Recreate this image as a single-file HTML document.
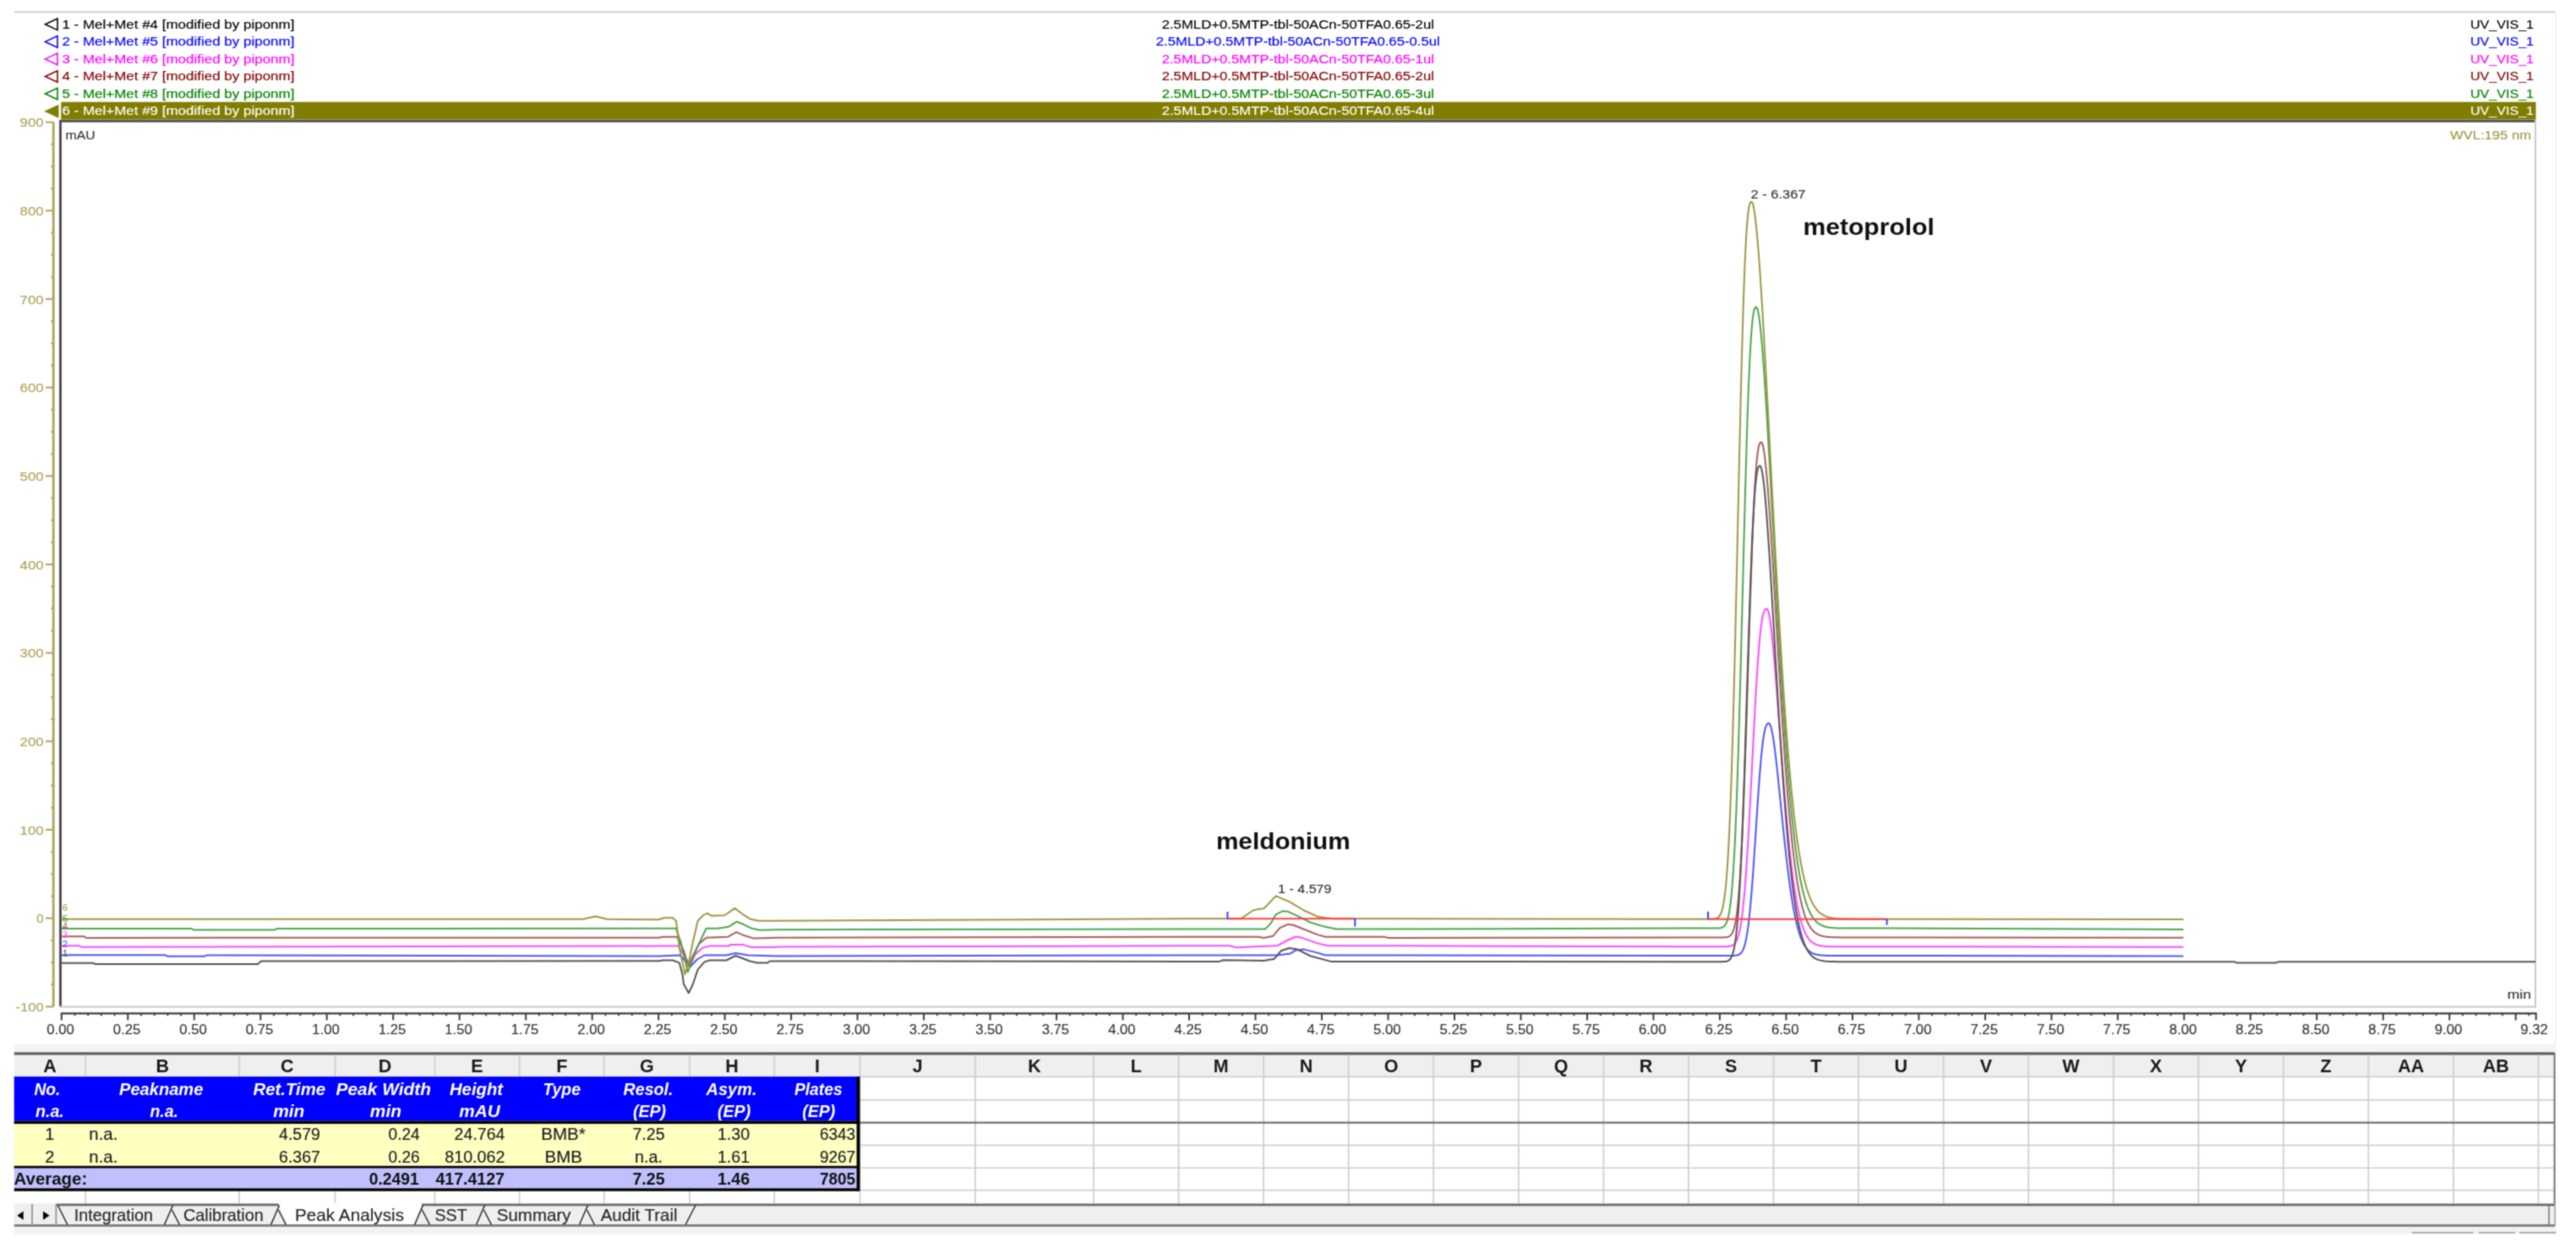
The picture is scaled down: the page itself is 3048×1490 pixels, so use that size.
<!DOCTYPE html>
<html><head><meta charset="utf-8"><title>Chromatogram</title>
<style>
html,body{margin:0;padding:0;background:#fff;width:3048px;height:1490px;overflow:hidden}
svg{display:block;font-family:"Liberation Sans", sans-serif}
</style></head><body>
<svg width="3048" height="1490" viewBox="0 0 3048 1490">
<defs><filter id="soft" x="0" y="0" width="3048" height="1490" filterUnits="userSpaceOnUse" color-interpolation-filters="sRGB"><feConvolveMatrix order="3" kernelMatrix="0.04 0.12 0.04 0.12 0.36 0.12 0.04 0.12 0.04" edgeMode="duplicate"/></filter></defs>
<g filter="url(#soft)">
<rect x="0" y="0" width="3048" height="1490" fill="#ffffff"/>
<line x1="17.0" y1="14.2" x2="3024.0" y2="14.2" stroke="#c4c4c4" stroke-width="1.6"/>
<line x1="3024.0" y1="14.0" x2="3024.0" y2="1236.0" stroke="#f0f0f0" stroke-width="1.5"/>
<rect x="72.3" y="120.7" width="2928.2" height="20.8" fill="#807d00"/>
<polygon points="52.2,131.8 69.5,123.8 69.5,139.8" fill="#807d00"/>
<polygon points="53.5,28.8 68,22.0 68,35.6" fill="none" stroke="#000000" stroke-width="1.6"/>
<text x="73.4" y="33.6" font-size="14" fill="#000000" textLength="275.0" lengthAdjust="spacingAndGlyphs" stroke="#000000" stroke-width="0.15">1 - Mel+Met #4 [modified by piponm]</text>
<text x="1535.8" y="33.6" font-size="14" fill="#000000" text-anchor="middle" textLength="322.3" lengthAdjust="spacingAndGlyphs" stroke="#000000" stroke-width="0.15">2.5MLD+0.5MTP-tbl-50ACn-50TFA0.65-2ul</text>
<text x="2998.0" y="33.6" font-size="14" fill="#000000" text-anchor="end" textLength="75.0" lengthAdjust="spacingAndGlyphs" stroke="#000000" stroke-width="0.15">UV_VIS_1</text>
<polygon points="53.5,49.4 68,42.6 68,56.2" fill="none" stroke="#0000ff" stroke-width="1.6"/>
<text x="73.4" y="54.2" font-size="14" fill="#0000ff" textLength="275.0" lengthAdjust="spacingAndGlyphs" stroke="#0000ff" stroke-width="0.15">2 - Mel+Met #5 [modified by piponm]</text>
<text x="1535.8" y="54.2" font-size="14" fill="#0000ff" text-anchor="middle" textLength="336.0" lengthAdjust="spacingAndGlyphs" stroke="#0000ff" stroke-width="0.15">2.5MLD+0.5MTP-tbl-50ACn-50TFA0.65-0.5ul</text>
<text x="2998.0" y="54.2" font-size="14" fill="#0000ff" text-anchor="end" textLength="75.0" lengthAdjust="spacingAndGlyphs" stroke="#0000ff" stroke-width="0.15">UV_VIS_1</text>
<polygon points="53.5,69.9 68,63.1 68,76.7" fill="none" stroke="#ff00ff" stroke-width="1.6"/>
<text x="73.4" y="74.7" font-size="14" fill="#ff00ff" textLength="275.0" lengthAdjust="spacingAndGlyphs" stroke="#ff00ff" stroke-width="0.15">3 - Mel+Met #6 [modified by piponm]</text>
<text x="1535.8" y="74.7" font-size="14" fill="#ff00ff" text-anchor="middle" textLength="322.3" lengthAdjust="spacingAndGlyphs" stroke="#ff00ff" stroke-width="0.15">2.5MLD+0.5MTP-tbl-50ACn-50TFA0.65-1ul</text>
<text x="2998.0" y="74.7" font-size="14" fill="#ff00ff" text-anchor="end" textLength="75.0" lengthAdjust="spacingAndGlyphs" stroke="#ff00ff" stroke-width="0.15">UV_VIS_1</text>
<polygon points="53.5,90.5 68,83.7 68,97.3" fill="none" stroke="#800000" stroke-width="1.6"/>
<text x="73.4" y="95.3" font-size="14" fill="#800000" textLength="275.0" lengthAdjust="spacingAndGlyphs" stroke="#800000" stroke-width="0.15">4 - Mel+Met #7 [modified by piponm]</text>
<text x="1535.8" y="95.3" font-size="14" fill="#800000" text-anchor="middle" textLength="322.3" lengthAdjust="spacingAndGlyphs" stroke="#800000" stroke-width="0.15">2.5MLD+0.5MTP-tbl-50ACn-50TFA0.65-2ul</text>
<text x="2998.0" y="95.3" font-size="14" fill="#800000" text-anchor="end" textLength="75.0" lengthAdjust="spacingAndGlyphs" stroke="#800000" stroke-width="0.15">UV_VIS_1</text>
<polygon points="53.5,111.0 68,104.2 68,117.8" fill="none" stroke="#008000" stroke-width="1.6"/>
<text x="73.4" y="115.8" font-size="14" fill="#008000" textLength="275.0" lengthAdjust="spacingAndGlyphs" stroke="#008000" stroke-width="0.15">5 - Mel+Met #8 [modified by piponm]</text>
<text x="1535.8" y="115.8" font-size="14" fill="#008000" text-anchor="middle" textLength="322.3" lengthAdjust="spacingAndGlyphs" stroke="#008000" stroke-width="0.15">2.5MLD+0.5MTP-tbl-50ACn-50TFA0.65-3ul</text>
<text x="2998.0" y="115.8" font-size="14" fill="#008000" text-anchor="end" textLength="75.0" lengthAdjust="spacingAndGlyphs" stroke="#008000" stroke-width="0.15">UV_VIS_1</text>
<text x="73.4" y="136.4" font-size="14" fill="#ffffff" textLength="275.0" lengthAdjust="spacingAndGlyphs" stroke="#ffffff" stroke-width="0.15">6 - Mel+Met #9 [modified by piponm]</text>
<text x="1535.8" y="136.4" font-size="14" fill="#ffffff" text-anchor="middle" textLength="322.3" lengthAdjust="spacingAndGlyphs" stroke="#ffffff" stroke-width="0.15">2.5MLD+0.5MTP-tbl-50ACn-50TFA0.65-4ul</text>
<text x="2998.0" y="136.4" font-size="14" fill="#ffffff" text-anchor="end" textLength="75.0" lengthAdjust="spacingAndGlyphs" stroke="#ffffff" stroke-width="0.15">UV_VIS_1</text>
<line x1="71.5" y1="142.5" x2="71.5" y2="1191.5" stroke="#505050" stroke-width="3"/>
<line x1="70.0" y1="143.2" x2="3001.0" y2="143.2" stroke="#505050" stroke-width="3"/>
<line x1="3000.0" y1="142.0" x2="3000.0" y2="1192.3" stroke="#c8c8c8" stroke-width="2"/>
<line x1="70.0" y1="1191.4" x2="3001.0" y2="1191.4" stroke="#c8c8c8" stroke-width="2"/>
<text x="77.6" y="165.0" font-size="14" fill="#333333" textLength="35.0" lengthAdjust="spacingAndGlyphs" stroke="#333333" stroke-width="0.15">mAU</text>
<text x="2995.0" y="165.0" font-size="14" fill="#a09848" text-anchor="end" textLength="96.0" lengthAdjust="spacingAndGlyphs" stroke="#a09848" stroke-width="0.15">WVL:195 nm</text>
<text x="2994.8" y="1181.5" font-size="14" fill="#333333" text-anchor="end" textLength="28.0" lengthAdjust="spacingAndGlyphs" stroke="#333333" stroke-width="0.15">min</text>
<line x1="63.2" y1="144.6" x2="63.2" y2="1191.4" stroke="#aaa35a" stroke-width="2.8"/>
<line x1="54.0" y1="1191.4" x2="63.0" y2="1191.4" stroke="#aaa35a" stroke-width="2"/>
<text x="51.6" y="1197.0" font-size="15" fill="#aca35a" text-anchor="end" textLength="33.0" lengthAdjust="spacingAndGlyphs" stroke="#aca35a" stroke-width="0.15">-100</text>
<line x1="60.3" y1="1165.2" x2="63.0" y2="1165.2" stroke="#aaa35a" stroke-width="2"/>
<line x1="60.3" y1="1139.0" x2="63.0" y2="1139.0" stroke="#aaa35a" stroke-width="2"/>
<line x1="60.3" y1="1112.9" x2="63.0" y2="1112.9" stroke="#aaa35a" stroke-width="2"/>
<line x1="54.0" y1="1086.7" x2="63.0" y2="1086.7" stroke="#aaa35a" stroke-width="2"/>
<text x="51.6" y="1092.3" font-size="15" fill="#aca35a" text-anchor="end" stroke="#aca35a" stroke-width="0.15">0</text>
<line x1="60.3" y1="1060.5" x2="63.0" y2="1060.5" stroke="#aaa35a" stroke-width="2"/>
<line x1="60.3" y1="1034.4" x2="63.0" y2="1034.4" stroke="#aaa35a" stroke-width="2"/>
<line x1="60.3" y1="1008.2" x2="63.0" y2="1008.2" stroke="#aaa35a" stroke-width="2"/>
<line x1="54.0" y1="982.0" x2="63.0" y2="982.0" stroke="#aaa35a" stroke-width="2"/>
<text x="51.6" y="987.6" font-size="15" fill="#aca35a" text-anchor="end" textLength="28.0" lengthAdjust="spacingAndGlyphs" stroke="#aca35a" stroke-width="0.15">100</text>
<line x1="60.3" y1="955.9" x2="63.0" y2="955.9" stroke="#aaa35a" stroke-width="2"/>
<line x1="60.3" y1="929.7" x2="63.0" y2="929.7" stroke="#aaa35a" stroke-width="2"/>
<line x1="60.3" y1="903.5" x2="63.0" y2="903.5" stroke="#aaa35a" stroke-width="2"/>
<line x1="54.0" y1="877.3" x2="63.0" y2="877.3" stroke="#aaa35a" stroke-width="2"/>
<text x="51.6" y="882.9" font-size="15" fill="#aca35a" text-anchor="end" textLength="28.0" lengthAdjust="spacingAndGlyphs" stroke="#aca35a" stroke-width="0.15">200</text>
<line x1="60.3" y1="851.2" x2="63.0" y2="851.2" stroke="#aaa35a" stroke-width="2"/>
<line x1="60.3" y1="825.0" x2="63.0" y2="825.0" stroke="#aaa35a" stroke-width="2"/>
<line x1="60.3" y1="798.8" x2="63.0" y2="798.8" stroke="#aaa35a" stroke-width="2"/>
<line x1="54.0" y1="772.7" x2="63.0" y2="772.7" stroke="#aaa35a" stroke-width="2"/>
<text x="51.6" y="778.3" font-size="15" fill="#aca35a" text-anchor="end" textLength="28.0" lengthAdjust="spacingAndGlyphs" stroke="#aca35a" stroke-width="0.15">300</text>
<line x1="60.3" y1="746.5" x2="63.0" y2="746.5" stroke="#aaa35a" stroke-width="2"/>
<line x1="60.3" y1="720.3" x2="63.0" y2="720.3" stroke="#aaa35a" stroke-width="2"/>
<line x1="60.3" y1="694.2" x2="63.0" y2="694.2" stroke="#aaa35a" stroke-width="2"/>
<line x1="54.0" y1="668.0" x2="63.0" y2="668.0" stroke="#aaa35a" stroke-width="2"/>
<text x="51.6" y="673.6" font-size="15" fill="#aca35a" text-anchor="end" textLength="28.0" lengthAdjust="spacingAndGlyphs" stroke="#aca35a" stroke-width="0.15">400</text>
<line x1="60.3" y1="641.8" x2="63.0" y2="641.8" stroke="#aaa35a" stroke-width="2"/>
<line x1="60.3" y1="615.6" x2="63.0" y2="615.6" stroke="#aaa35a" stroke-width="2"/>
<line x1="60.3" y1="589.5" x2="63.0" y2="589.5" stroke="#aaa35a" stroke-width="2"/>
<line x1="54.0" y1="563.3" x2="63.0" y2="563.3" stroke="#aaa35a" stroke-width="2"/>
<text x="51.6" y="568.9" font-size="15" fill="#aca35a" text-anchor="end" textLength="28.0" lengthAdjust="spacingAndGlyphs" stroke="#aca35a" stroke-width="0.15">500</text>
<line x1="60.3" y1="537.1" x2="63.0" y2="537.1" stroke="#aaa35a" stroke-width="2"/>
<line x1="60.3" y1="511.0" x2="63.0" y2="511.0" stroke="#aaa35a" stroke-width="2"/>
<line x1="60.3" y1="484.8" x2="63.0" y2="484.8" stroke="#aaa35a" stroke-width="2"/>
<line x1="54.0" y1="458.6" x2="63.0" y2="458.6" stroke="#aaa35a" stroke-width="2"/>
<text x="51.6" y="464.2" font-size="15" fill="#aca35a" text-anchor="end" textLength="28.0" lengthAdjust="spacingAndGlyphs" stroke="#aca35a" stroke-width="0.15">600</text>
<line x1="60.3" y1="432.5" x2="63.0" y2="432.5" stroke="#aaa35a" stroke-width="2"/>
<line x1="60.3" y1="406.3" x2="63.0" y2="406.3" stroke="#aaa35a" stroke-width="2"/>
<line x1="60.3" y1="380.1" x2="63.0" y2="380.1" stroke="#aaa35a" stroke-width="2"/>
<line x1="54.0" y1="353.9" x2="63.0" y2="353.9" stroke="#aaa35a" stroke-width="2"/>
<text x="51.6" y="359.5" font-size="15" fill="#aca35a" text-anchor="end" textLength="28.0" lengthAdjust="spacingAndGlyphs" stroke="#aca35a" stroke-width="0.15">700</text>
<line x1="60.3" y1="327.8" x2="63.0" y2="327.8" stroke="#aaa35a" stroke-width="2"/>
<line x1="60.3" y1="301.6" x2="63.0" y2="301.6" stroke="#aaa35a" stroke-width="2"/>
<line x1="60.3" y1="275.4" x2="63.0" y2="275.4" stroke="#aaa35a" stroke-width="2"/>
<line x1="54.0" y1="249.3" x2="63.0" y2="249.3" stroke="#aaa35a" stroke-width="2"/>
<text x="51.6" y="254.9" font-size="15" fill="#aca35a" text-anchor="end" textLength="28.0" lengthAdjust="spacingAndGlyphs" stroke="#aca35a" stroke-width="0.15">800</text>
<line x1="60.3" y1="223.1" x2="63.0" y2="223.1" stroke="#aaa35a" stroke-width="2"/>
<line x1="60.3" y1="196.9" x2="63.0" y2="196.9" stroke="#aaa35a" stroke-width="2"/>
<line x1="60.3" y1="170.8" x2="63.0" y2="170.8" stroke="#aaa35a" stroke-width="2"/>
<line x1="54.0" y1="144.6" x2="63.0" y2="144.6" stroke="#aaa35a" stroke-width="2"/>
<text x="51.6" y="150.2" font-size="15" fill="#aca35a" text-anchor="end" textLength="28.0" lengthAdjust="spacingAndGlyphs" stroke="#aca35a" stroke-width="0.15">900</text>
<line x1="71.9" y1="1199.3" x2="3001.5" y2="1199.3" stroke="#3c3c3c" stroke-width="2.2"/>
<line x1="72.8" y1="1199.0" x2="72.8" y2="1207.4" stroke="#3c3c3c" stroke-width="2"/>
<text x="71.6" y="1224.4" font-size="16" fill="#333333" text-anchor="middle" textLength="32.5" lengthAdjust="spacingAndGlyphs" stroke="#333333" stroke-width="0.15">0.00</text>
<line x1="88.5" y1="1199.0" x2="88.5" y2="1202.2" stroke="#3c3c3c" stroke-width="1.8"/>
<line x1="104.2" y1="1199.0" x2="104.2" y2="1202.2" stroke="#3c3c3c" stroke-width="1.8"/>
<line x1="119.9" y1="1199.0" x2="119.9" y2="1202.2" stroke="#3c3c3c" stroke-width="1.8"/>
<line x1="135.6" y1="1199.0" x2="135.6" y2="1202.2" stroke="#3c3c3c" stroke-width="1.8"/>
<line x1="151.3" y1="1199.0" x2="151.3" y2="1207.4" stroke="#3c3c3c" stroke-width="2"/>
<text x="150.1" y="1224.4" font-size="16" fill="#333333" text-anchor="middle" textLength="32.5" lengthAdjust="spacingAndGlyphs" stroke="#333333" stroke-width="0.15">0.25</text>
<line x1="167.0" y1="1199.0" x2="167.0" y2="1202.2" stroke="#3c3c3c" stroke-width="1.8"/>
<line x1="182.7" y1="1199.0" x2="182.7" y2="1202.2" stroke="#3c3c3c" stroke-width="1.8"/>
<line x1="198.4" y1="1199.0" x2="198.4" y2="1202.2" stroke="#3c3c3c" stroke-width="1.8"/>
<line x1="214.1" y1="1199.0" x2="214.1" y2="1202.2" stroke="#3c3c3c" stroke-width="1.8"/>
<line x1="229.8" y1="1199.0" x2="229.8" y2="1207.4" stroke="#3c3c3c" stroke-width="2"/>
<text x="228.6" y="1224.4" font-size="16" fill="#333333" text-anchor="middle" textLength="32.5" lengthAdjust="spacingAndGlyphs" stroke="#333333" stroke-width="0.15">0.50</text>
<line x1="245.5" y1="1199.0" x2="245.5" y2="1202.2" stroke="#3c3c3c" stroke-width="1.8"/>
<line x1="261.2" y1="1199.0" x2="261.2" y2="1202.2" stroke="#3c3c3c" stroke-width="1.8"/>
<line x1="276.9" y1="1199.0" x2="276.9" y2="1202.2" stroke="#3c3c3c" stroke-width="1.8"/>
<line x1="292.6" y1="1199.0" x2="292.6" y2="1202.2" stroke="#3c3c3c" stroke-width="1.8"/>
<line x1="308.3" y1="1199.0" x2="308.3" y2="1207.4" stroke="#3c3c3c" stroke-width="2"/>
<text x="307.1" y="1224.4" font-size="16" fill="#333333" text-anchor="middle" textLength="32.5" lengthAdjust="spacingAndGlyphs" stroke="#333333" stroke-width="0.15">0.75</text>
<line x1="324.0" y1="1199.0" x2="324.0" y2="1202.2" stroke="#3c3c3c" stroke-width="1.8"/>
<line x1="339.6" y1="1199.0" x2="339.6" y2="1202.2" stroke="#3c3c3c" stroke-width="1.8"/>
<line x1="355.3" y1="1199.0" x2="355.3" y2="1202.2" stroke="#3c3c3c" stroke-width="1.8"/>
<line x1="371.0" y1="1199.0" x2="371.0" y2="1202.2" stroke="#3c3c3c" stroke-width="1.8"/>
<line x1="386.7" y1="1199.0" x2="386.7" y2="1207.4" stroke="#3c3c3c" stroke-width="2"/>
<text x="385.5" y="1224.4" font-size="16" fill="#333333" text-anchor="middle" textLength="32.5" lengthAdjust="spacingAndGlyphs" stroke="#333333" stroke-width="0.15">1.00</text>
<line x1="402.4" y1="1199.0" x2="402.4" y2="1202.2" stroke="#3c3c3c" stroke-width="1.8"/>
<line x1="418.1" y1="1199.0" x2="418.1" y2="1202.2" stroke="#3c3c3c" stroke-width="1.8"/>
<line x1="433.8" y1="1199.0" x2="433.8" y2="1202.2" stroke="#3c3c3c" stroke-width="1.8"/>
<line x1="449.5" y1="1199.0" x2="449.5" y2="1202.2" stroke="#3c3c3c" stroke-width="1.8"/>
<line x1="465.2" y1="1199.0" x2="465.2" y2="1207.4" stroke="#3c3c3c" stroke-width="2"/>
<text x="464.0" y="1224.4" font-size="16" fill="#333333" text-anchor="middle" textLength="32.5" lengthAdjust="spacingAndGlyphs" stroke="#333333" stroke-width="0.15">1.25</text>
<line x1="480.9" y1="1199.0" x2="480.9" y2="1202.2" stroke="#3c3c3c" stroke-width="1.8"/>
<line x1="496.6" y1="1199.0" x2="496.6" y2="1202.2" stroke="#3c3c3c" stroke-width="1.8"/>
<line x1="512.3" y1="1199.0" x2="512.3" y2="1202.2" stroke="#3c3c3c" stroke-width="1.8"/>
<line x1="528.0" y1="1199.0" x2="528.0" y2="1202.2" stroke="#3c3c3c" stroke-width="1.8"/>
<line x1="543.7" y1="1199.0" x2="543.7" y2="1207.4" stroke="#3c3c3c" stroke-width="2"/>
<text x="542.5" y="1224.4" font-size="16" fill="#333333" text-anchor="middle" textLength="32.5" lengthAdjust="spacingAndGlyphs" stroke="#333333" stroke-width="0.15">1.50</text>
<line x1="559.4" y1="1199.0" x2="559.4" y2="1202.2" stroke="#3c3c3c" stroke-width="1.8"/>
<line x1="575.1" y1="1199.0" x2="575.1" y2="1202.2" stroke="#3c3c3c" stroke-width="1.8"/>
<line x1="590.8" y1="1199.0" x2="590.8" y2="1202.2" stroke="#3c3c3c" stroke-width="1.8"/>
<line x1="606.5" y1="1199.0" x2="606.5" y2="1202.2" stroke="#3c3c3c" stroke-width="1.8"/>
<line x1="622.2" y1="1199.0" x2="622.2" y2="1207.4" stroke="#3c3c3c" stroke-width="2"/>
<text x="621.0" y="1224.4" font-size="16" fill="#333333" text-anchor="middle" textLength="32.5" lengthAdjust="spacingAndGlyphs" stroke="#333333" stroke-width="0.15">1.75</text>
<line x1="637.9" y1="1199.0" x2="637.9" y2="1202.2" stroke="#3c3c3c" stroke-width="1.8"/>
<line x1="653.6" y1="1199.0" x2="653.6" y2="1202.2" stroke="#3c3c3c" stroke-width="1.8"/>
<line x1="669.3" y1="1199.0" x2="669.3" y2="1202.2" stroke="#3c3c3c" stroke-width="1.8"/>
<line x1="685.0" y1="1199.0" x2="685.0" y2="1202.2" stroke="#3c3c3c" stroke-width="1.8"/>
<line x1="700.7" y1="1199.0" x2="700.7" y2="1207.4" stroke="#3c3c3c" stroke-width="2"/>
<text x="699.5" y="1224.4" font-size="16" fill="#333333" text-anchor="middle" textLength="32.5" lengthAdjust="spacingAndGlyphs" stroke="#333333" stroke-width="0.15">2.00</text>
<line x1="716.4" y1="1199.0" x2="716.4" y2="1202.2" stroke="#3c3c3c" stroke-width="1.8"/>
<line x1="732.1" y1="1199.0" x2="732.1" y2="1202.2" stroke="#3c3c3c" stroke-width="1.8"/>
<line x1="747.8" y1="1199.0" x2="747.8" y2="1202.2" stroke="#3c3c3c" stroke-width="1.8"/>
<line x1="763.5" y1="1199.0" x2="763.5" y2="1202.2" stroke="#3c3c3c" stroke-width="1.8"/>
<line x1="779.2" y1="1199.0" x2="779.2" y2="1207.4" stroke="#3c3c3c" stroke-width="2"/>
<text x="778.0" y="1224.4" font-size="16" fill="#333333" text-anchor="middle" textLength="32.5" lengthAdjust="spacingAndGlyphs" stroke="#333333" stroke-width="0.15">2.25</text>
<line x1="794.9" y1="1199.0" x2="794.9" y2="1202.2" stroke="#3c3c3c" stroke-width="1.8"/>
<line x1="810.6" y1="1199.0" x2="810.6" y2="1202.2" stroke="#3c3c3c" stroke-width="1.8"/>
<line x1="826.3" y1="1199.0" x2="826.3" y2="1202.2" stroke="#3c3c3c" stroke-width="1.8"/>
<line x1="842.0" y1="1199.0" x2="842.0" y2="1202.2" stroke="#3c3c3c" stroke-width="1.8"/>
<line x1="857.6" y1="1199.0" x2="857.6" y2="1207.4" stroke="#3c3c3c" stroke-width="2"/>
<text x="856.4" y="1224.4" font-size="16" fill="#333333" text-anchor="middle" textLength="32.5" lengthAdjust="spacingAndGlyphs" stroke="#333333" stroke-width="0.15">2.50</text>
<line x1="873.3" y1="1199.0" x2="873.3" y2="1202.2" stroke="#3c3c3c" stroke-width="1.8"/>
<line x1="889.0" y1="1199.0" x2="889.0" y2="1202.2" stroke="#3c3c3c" stroke-width="1.8"/>
<line x1="904.7" y1="1199.0" x2="904.7" y2="1202.2" stroke="#3c3c3c" stroke-width="1.8"/>
<line x1="920.4" y1="1199.0" x2="920.4" y2="1202.2" stroke="#3c3c3c" stroke-width="1.8"/>
<line x1="936.1" y1="1199.0" x2="936.1" y2="1207.4" stroke="#3c3c3c" stroke-width="2"/>
<text x="934.9" y="1224.4" font-size="16" fill="#333333" text-anchor="middle" textLength="32.5" lengthAdjust="spacingAndGlyphs" stroke="#333333" stroke-width="0.15">2.75</text>
<line x1="951.8" y1="1199.0" x2="951.8" y2="1202.2" stroke="#3c3c3c" stroke-width="1.8"/>
<line x1="967.5" y1="1199.0" x2="967.5" y2="1202.2" stroke="#3c3c3c" stroke-width="1.8"/>
<line x1="983.2" y1="1199.0" x2="983.2" y2="1202.2" stroke="#3c3c3c" stroke-width="1.8"/>
<line x1="998.9" y1="1199.0" x2="998.9" y2="1202.2" stroke="#3c3c3c" stroke-width="1.8"/>
<line x1="1014.6" y1="1199.0" x2="1014.6" y2="1207.4" stroke="#3c3c3c" stroke-width="2"/>
<text x="1013.4" y="1224.4" font-size="16" fill="#333333" text-anchor="middle" textLength="32.5" lengthAdjust="spacingAndGlyphs" stroke="#333333" stroke-width="0.15">3.00</text>
<line x1="1030.3" y1="1199.0" x2="1030.3" y2="1202.2" stroke="#3c3c3c" stroke-width="1.8"/>
<line x1="1046.0" y1="1199.0" x2="1046.0" y2="1202.2" stroke="#3c3c3c" stroke-width="1.8"/>
<line x1="1061.7" y1="1199.0" x2="1061.7" y2="1202.2" stroke="#3c3c3c" stroke-width="1.8"/>
<line x1="1077.4" y1="1199.0" x2="1077.4" y2="1202.2" stroke="#3c3c3c" stroke-width="1.8"/>
<line x1="1093.1" y1="1199.0" x2="1093.1" y2="1207.4" stroke="#3c3c3c" stroke-width="2"/>
<text x="1091.9" y="1224.4" font-size="16" fill="#333333" text-anchor="middle" textLength="32.5" lengthAdjust="spacingAndGlyphs" stroke="#333333" stroke-width="0.15">3.25</text>
<line x1="1108.8" y1="1199.0" x2="1108.8" y2="1202.2" stroke="#3c3c3c" stroke-width="1.8"/>
<line x1="1124.5" y1="1199.0" x2="1124.5" y2="1202.2" stroke="#3c3c3c" stroke-width="1.8"/>
<line x1="1140.2" y1="1199.0" x2="1140.2" y2="1202.2" stroke="#3c3c3c" stroke-width="1.8"/>
<line x1="1155.9" y1="1199.0" x2="1155.9" y2="1202.2" stroke="#3c3c3c" stroke-width="1.8"/>
<line x1="1171.6" y1="1199.0" x2="1171.6" y2="1207.4" stroke="#3c3c3c" stroke-width="2"/>
<text x="1170.4" y="1224.4" font-size="16" fill="#333333" text-anchor="middle" textLength="32.5" lengthAdjust="spacingAndGlyphs" stroke="#333333" stroke-width="0.15">3.50</text>
<line x1="1187.3" y1="1199.0" x2="1187.3" y2="1202.2" stroke="#3c3c3c" stroke-width="1.8"/>
<line x1="1203.0" y1="1199.0" x2="1203.0" y2="1202.2" stroke="#3c3c3c" stroke-width="1.8"/>
<line x1="1218.7" y1="1199.0" x2="1218.7" y2="1202.2" stroke="#3c3c3c" stroke-width="1.8"/>
<line x1="1234.4" y1="1199.0" x2="1234.4" y2="1202.2" stroke="#3c3c3c" stroke-width="1.8"/>
<line x1="1250.1" y1="1199.0" x2="1250.1" y2="1207.4" stroke="#3c3c3c" stroke-width="2"/>
<text x="1248.9" y="1224.4" font-size="16" fill="#333333" text-anchor="middle" textLength="32.5" lengthAdjust="spacingAndGlyphs" stroke="#333333" stroke-width="0.15">3.75</text>
<line x1="1265.8" y1="1199.0" x2="1265.8" y2="1202.2" stroke="#3c3c3c" stroke-width="1.8"/>
<line x1="1281.5" y1="1199.0" x2="1281.5" y2="1202.2" stroke="#3c3c3c" stroke-width="1.8"/>
<line x1="1297.2" y1="1199.0" x2="1297.2" y2="1202.2" stroke="#3c3c3c" stroke-width="1.8"/>
<line x1="1312.9" y1="1199.0" x2="1312.9" y2="1202.2" stroke="#3c3c3c" stroke-width="1.8"/>
<line x1="1328.6" y1="1199.0" x2="1328.6" y2="1207.4" stroke="#3c3c3c" stroke-width="2"/>
<text x="1327.4" y="1224.4" font-size="16" fill="#333333" text-anchor="middle" textLength="32.5" lengthAdjust="spacingAndGlyphs" stroke="#333333" stroke-width="0.15">4.00</text>
<line x1="1344.3" y1="1199.0" x2="1344.3" y2="1202.2" stroke="#3c3c3c" stroke-width="1.8"/>
<line x1="1360.0" y1="1199.0" x2="1360.0" y2="1202.2" stroke="#3c3c3c" stroke-width="1.8"/>
<line x1="1375.7" y1="1199.0" x2="1375.7" y2="1202.2" stroke="#3c3c3c" stroke-width="1.8"/>
<line x1="1391.3" y1="1199.0" x2="1391.3" y2="1202.2" stroke="#3c3c3c" stroke-width="1.8"/>
<line x1="1407.0" y1="1199.0" x2="1407.0" y2="1207.4" stroke="#3c3c3c" stroke-width="2"/>
<text x="1405.8" y="1224.4" font-size="16" fill="#333333" text-anchor="middle" textLength="32.5" lengthAdjust="spacingAndGlyphs" stroke="#333333" stroke-width="0.15">4.25</text>
<line x1="1422.7" y1="1199.0" x2="1422.7" y2="1202.2" stroke="#3c3c3c" stroke-width="1.8"/>
<line x1="1438.4" y1="1199.0" x2="1438.4" y2="1202.2" stroke="#3c3c3c" stroke-width="1.8"/>
<line x1="1454.1" y1="1199.0" x2="1454.1" y2="1202.2" stroke="#3c3c3c" stroke-width="1.8"/>
<line x1="1469.8" y1="1199.0" x2="1469.8" y2="1202.2" stroke="#3c3c3c" stroke-width="1.8"/>
<line x1="1485.5" y1="1199.0" x2="1485.5" y2="1207.4" stroke="#3c3c3c" stroke-width="2"/>
<text x="1484.3" y="1224.4" font-size="16" fill="#333333" text-anchor="middle" textLength="32.5" lengthAdjust="spacingAndGlyphs" stroke="#333333" stroke-width="0.15">4.50</text>
<line x1="1501.2" y1="1199.0" x2="1501.2" y2="1202.2" stroke="#3c3c3c" stroke-width="1.8"/>
<line x1="1516.9" y1="1199.0" x2="1516.9" y2="1202.2" stroke="#3c3c3c" stroke-width="1.8"/>
<line x1="1532.6" y1="1199.0" x2="1532.6" y2="1202.2" stroke="#3c3c3c" stroke-width="1.8"/>
<line x1="1548.3" y1="1199.0" x2="1548.3" y2="1202.2" stroke="#3c3c3c" stroke-width="1.8"/>
<line x1="1564.0" y1="1199.0" x2="1564.0" y2="1207.4" stroke="#3c3c3c" stroke-width="2"/>
<text x="1562.8" y="1224.4" font-size="16" fill="#333333" text-anchor="middle" textLength="32.5" lengthAdjust="spacingAndGlyphs" stroke="#333333" stroke-width="0.15">4.75</text>
<line x1="1579.7" y1="1199.0" x2="1579.7" y2="1202.2" stroke="#3c3c3c" stroke-width="1.8"/>
<line x1="1595.4" y1="1199.0" x2="1595.4" y2="1202.2" stroke="#3c3c3c" stroke-width="1.8"/>
<line x1="1611.1" y1="1199.0" x2="1611.1" y2="1202.2" stroke="#3c3c3c" stroke-width="1.8"/>
<line x1="1626.8" y1="1199.0" x2="1626.8" y2="1202.2" stroke="#3c3c3c" stroke-width="1.8"/>
<line x1="1642.5" y1="1199.0" x2="1642.5" y2="1207.4" stroke="#3c3c3c" stroke-width="2"/>
<text x="1641.3" y="1224.4" font-size="16" fill="#333333" text-anchor="middle" textLength="32.5" lengthAdjust="spacingAndGlyphs" stroke="#333333" stroke-width="0.15">5.00</text>
<line x1="1658.2" y1="1199.0" x2="1658.2" y2="1202.2" stroke="#3c3c3c" stroke-width="1.8"/>
<line x1="1673.9" y1="1199.0" x2="1673.9" y2="1202.2" stroke="#3c3c3c" stroke-width="1.8"/>
<line x1="1689.6" y1="1199.0" x2="1689.6" y2="1202.2" stroke="#3c3c3c" stroke-width="1.8"/>
<line x1="1705.3" y1="1199.0" x2="1705.3" y2="1202.2" stroke="#3c3c3c" stroke-width="1.8"/>
<line x1="1721.0" y1="1199.0" x2="1721.0" y2="1207.4" stroke="#3c3c3c" stroke-width="2"/>
<text x="1719.8" y="1224.4" font-size="16" fill="#333333" text-anchor="middle" textLength="32.5" lengthAdjust="spacingAndGlyphs" stroke="#333333" stroke-width="0.15">5.25</text>
<line x1="1736.7" y1="1199.0" x2="1736.7" y2="1202.2" stroke="#3c3c3c" stroke-width="1.8"/>
<line x1="1752.4" y1="1199.0" x2="1752.4" y2="1202.2" stroke="#3c3c3c" stroke-width="1.8"/>
<line x1="1768.1" y1="1199.0" x2="1768.1" y2="1202.2" stroke="#3c3c3c" stroke-width="1.8"/>
<line x1="1783.8" y1="1199.0" x2="1783.8" y2="1202.2" stroke="#3c3c3c" stroke-width="1.8"/>
<line x1="1799.5" y1="1199.0" x2="1799.5" y2="1207.4" stroke="#3c3c3c" stroke-width="2"/>
<text x="1798.3" y="1224.4" font-size="16" fill="#333333" text-anchor="middle" textLength="32.5" lengthAdjust="spacingAndGlyphs" stroke="#333333" stroke-width="0.15">5.50</text>
<line x1="1815.2" y1="1199.0" x2="1815.2" y2="1202.2" stroke="#3c3c3c" stroke-width="1.8"/>
<line x1="1830.9" y1="1199.0" x2="1830.9" y2="1202.2" stroke="#3c3c3c" stroke-width="1.8"/>
<line x1="1846.6" y1="1199.0" x2="1846.6" y2="1202.2" stroke="#3c3c3c" stroke-width="1.8"/>
<line x1="1862.3" y1="1199.0" x2="1862.3" y2="1202.2" stroke="#3c3c3c" stroke-width="1.8"/>
<line x1="1878.0" y1="1199.0" x2="1878.0" y2="1207.4" stroke="#3c3c3c" stroke-width="2"/>
<text x="1876.8" y="1224.4" font-size="16" fill="#333333" text-anchor="middle" textLength="32.5" lengthAdjust="spacingAndGlyphs" stroke="#333333" stroke-width="0.15">5.75</text>
<line x1="1893.7" y1="1199.0" x2="1893.7" y2="1202.2" stroke="#3c3c3c" stroke-width="1.8"/>
<line x1="1909.3" y1="1199.0" x2="1909.3" y2="1202.2" stroke="#3c3c3c" stroke-width="1.8"/>
<line x1="1925.0" y1="1199.0" x2="1925.0" y2="1202.2" stroke="#3c3c3c" stroke-width="1.8"/>
<line x1="1940.7" y1="1199.0" x2="1940.7" y2="1202.2" stroke="#3c3c3c" stroke-width="1.8"/>
<line x1="1956.4" y1="1199.0" x2="1956.4" y2="1207.4" stroke="#3c3c3c" stroke-width="2"/>
<text x="1955.2" y="1224.4" font-size="16" fill="#333333" text-anchor="middle" textLength="32.5" lengthAdjust="spacingAndGlyphs" stroke="#333333" stroke-width="0.15">6.00</text>
<line x1="1972.1" y1="1199.0" x2="1972.1" y2="1202.2" stroke="#3c3c3c" stroke-width="1.8"/>
<line x1="1987.8" y1="1199.0" x2="1987.8" y2="1202.2" stroke="#3c3c3c" stroke-width="1.8"/>
<line x1="2003.5" y1="1199.0" x2="2003.5" y2="1202.2" stroke="#3c3c3c" stroke-width="1.8"/>
<line x1="2019.2" y1="1199.0" x2="2019.2" y2="1202.2" stroke="#3c3c3c" stroke-width="1.8"/>
<line x1="2034.9" y1="1199.0" x2="2034.9" y2="1207.4" stroke="#3c3c3c" stroke-width="2"/>
<text x="2033.7" y="1224.4" font-size="16" fill="#333333" text-anchor="middle" textLength="32.5" lengthAdjust="spacingAndGlyphs" stroke="#333333" stroke-width="0.15">6.25</text>
<line x1="2050.6" y1="1199.0" x2="2050.6" y2="1202.2" stroke="#3c3c3c" stroke-width="1.8"/>
<line x1="2066.3" y1="1199.0" x2="2066.3" y2="1202.2" stroke="#3c3c3c" stroke-width="1.8"/>
<line x1="2082.0" y1="1199.0" x2="2082.0" y2="1202.2" stroke="#3c3c3c" stroke-width="1.8"/>
<line x1="2097.7" y1="1199.0" x2="2097.7" y2="1202.2" stroke="#3c3c3c" stroke-width="1.8"/>
<line x1="2113.4" y1="1199.0" x2="2113.4" y2="1207.4" stroke="#3c3c3c" stroke-width="2"/>
<text x="2112.2" y="1224.4" font-size="16" fill="#333333" text-anchor="middle" textLength="32.5" lengthAdjust="spacingAndGlyphs" stroke="#333333" stroke-width="0.15">6.50</text>
<line x1="2129.1" y1="1199.0" x2="2129.1" y2="1202.2" stroke="#3c3c3c" stroke-width="1.8"/>
<line x1="2144.8" y1="1199.0" x2="2144.8" y2="1202.2" stroke="#3c3c3c" stroke-width="1.8"/>
<line x1="2160.5" y1="1199.0" x2="2160.5" y2="1202.2" stroke="#3c3c3c" stroke-width="1.8"/>
<line x1="2176.2" y1="1199.0" x2="2176.2" y2="1202.2" stroke="#3c3c3c" stroke-width="1.8"/>
<line x1="2191.9" y1="1199.0" x2="2191.9" y2="1207.4" stroke="#3c3c3c" stroke-width="2"/>
<text x="2190.7" y="1224.4" font-size="16" fill="#333333" text-anchor="middle" textLength="32.5" lengthAdjust="spacingAndGlyphs" stroke="#333333" stroke-width="0.15">6.75</text>
<line x1="2207.6" y1="1199.0" x2="2207.6" y2="1202.2" stroke="#3c3c3c" stroke-width="1.8"/>
<line x1="2223.3" y1="1199.0" x2="2223.3" y2="1202.2" stroke="#3c3c3c" stroke-width="1.8"/>
<line x1="2239.0" y1="1199.0" x2="2239.0" y2="1202.2" stroke="#3c3c3c" stroke-width="1.8"/>
<line x1="2254.7" y1="1199.0" x2="2254.7" y2="1202.2" stroke="#3c3c3c" stroke-width="1.8"/>
<line x1="2270.4" y1="1199.0" x2="2270.4" y2="1207.4" stroke="#3c3c3c" stroke-width="2"/>
<text x="2269.2" y="1224.4" font-size="16" fill="#333333" text-anchor="middle" textLength="32.5" lengthAdjust="spacingAndGlyphs" stroke="#333333" stroke-width="0.15">7.00</text>
<line x1="2286.1" y1="1199.0" x2="2286.1" y2="1202.2" stroke="#3c3c3c" stroke-width="1.8"/>
<line x1="2301.8" y1="1199.0" x2="2301.8" y2="1202.2" stroke="#3c3c3c" stroke-width="1.8"/>
<line x1="2317.5" y1="1199.0" x2="2317.5" y2="1202.2" stroke="#3c3c3c" stroke-width="1.8"/>
<line x1="2333.2" y1="1199.0" x2="2333.2" y2="1202.2" stroke="#3c3c3c" stroke-width="1.8"/>
<line x1="2348.9" y1="1199.0" x2="2348.9" y2="1207.4" stroke="#3c3c3c" stroke-width="2"/>
<text x="2347.7" y="1224.4" font-size="16" fill="#333333" text-anchor="middle" textLength="32.5" lengthAdjust="spacingAndGlyphs" stroke="#333333" stroke-width="0.15">7.25</text>
<line x1="2364.6" y1="1199.0" x2="2364.6" y2="1202.2" stroke="#3c3c3c" stroke-width="1.8"/>
<line x1="2380.3" y1="1199.0" x2="2380.3" y2="1202.2" stroke="#3c3c3c" stroke-width="1.8"/>
<line x1="2396.0" y1="1199.0" x2="2396.0" y2="1202.2" stroke="#3c3c3c" stroke-width="1.8"/>
<line x1="2411.7" y1="1199.0" x2="2411.7" y2="1202.2" stroke="#3c3c3c" stroke-width="1.8"/>
<line x1="2427.4" y1="1199.0" x2="2427.4" y2="1207.4" stroke="#3c3c3c" stroke-width="2"/>
<text x="2426.2" y="1224.4" font-size="16" fill="#333333" text-anchor="middle" textLength="32.5" lengthAdjust="spacingAndGlyphs" stroke="#333333" stroke-width="0.15">7.50</text>
<line x1="2443.0" y1="1199.0" x2="2443.0" y2="1202.2" stroke="#3c3c3c" stroke-width="1.8"/>
<line x1="2458.7" y1="1199.0" x2="2458.7" y2="1202.2" stroke="#3c3c3c" stroke-width="1.8"/>
<line x1="2474.4" y1="1199.0" x2="2474.4" y2="1202.2" stroke="#3c3c3c" stroke-width="1.8"/>
<line x1="2490.1" y1="1199.0" x2="2490.1" y2="1202.2" stroke="#3c3c3c" stroke-width="1.8"/>
<line x1="2505.8" y1="1199.0" x2="2505.8" y2="1207.4" stroke="#3c3c3c" stroke-width="2"/>
<text x="2504.6" y="1224.4" font-size="16" fill="#333333" text-anchor="middle" textLength="32.5" lengthAdjust="spacingAndGlyphs" stroke="#333333" stroke-width="0.15">7.75</text>
<line x1="2521.5" y1="1199.0" x2="2521.5" y2="1202.2" stroke="#3c3c3c" stroke-width="1.8"/>
<line x1="2537.2" y1="1199.0" x2="2537.2" y2="1202.2" stroke="#3c3c3c" stroke-width="1.8"/>
<line x1="2552.9" y1="1199.0" x2="2552.9" y2="1202.2" stroke="#3c3c3c" stroke-width="1.8"/>
<line x1="2568.6" y1="1199.0" x2="2568.6" y2="1202.2" stroke="#3c3c3c" stroke-width="1.8"/>
<line x1="2584.3" y1="1199.0" x2="2584.3" y2="1207.4" stroke="#3c3c3c" stroke-width="2"/>
<text x="2583.1" y="1224.4" font-size="16" fill="#333333" text-anchor="middle" textLength="32.5" lengthAdjust="spacingAndGlyphs" stroke="#333333" stroke-width="0.15">8.00</text>
<line x1="2600.0" y1="1199.0" x2="2600.0" y2="1202.2" stroke="#3c3c3c" stroke-width="1.8"/>
<line x1="2615.7" y1="1199.0" x2="2615.7" y2="1202.2" stroke="#3c3c3c" stroke-width="1.8"/>
<line x1="2631.4" y1="1199.0" x2="2631.4" y2="1202.2" stroke="#3c3c3c" stroke-width="1.8"/>
<line x1="2647.1" y1="1199.0" x2="2647.1" y2="1202.2" stroke="#3c3c3c" stroke-width="1.8"/>
<line x1="2662.8" y1="1199.0" x2="2662.8" y2="1207.4" stroke="#3c3c3c" stroke-width="2"/>
<text x="2661.6" y="1224.4" font-size="16" fill="#333333" text-anchor="middle" textLength="32.5" lengthAdjust="spacingAndGlyphs" stroke="#333333" stroke-width="0.15">8.25</text>
<line x1="2678.5" y1="1199.0" x2="2678.5" y2="1202.2" stroke="#3c3c3c" stroke-width="1.8"/>
<line x1="2694.2" y1="1199.0" x2="2694.2" y2="1202.2" stroke="#3c3c3c" stroke-width="1.8"/>
<line x1="2709.9" y1="1199.0" x2="2709.9" y2="1202.2" stroke="#3c3c3c" stroke-width="1.8"/>
<line x1="2725.6" y1="1199.0" x2="2725.6" y2="1202.2" stroke="#3c3c3c" stroke-width="1.8"/>
<line x1="2741.3" y1="1199.0" x2="2741.3" y2="1207.4" stroke="#3c3c3c" stroke-width="2"/>
<text x="2740.1" y="1224.4" font-size="16" fill="#333333" text-anchor="middle" textLength="32.5" lengthAdjust="spacingAndGlyphs" stroke="#333333" stroke-width="0.15">8.50</text>
<line x1="2757.0" y1="1199.0" x2="2757.0" y2="1202.2" stroke="#3c3c3c" stroke-width="1.8"/>
<line x1="2772.7" y1="1199.0" x2="2772.7" y2="1202.2" stroke="#3c3c3c" stroke-width="1.8"/>
<line x1="2788.4" y1="1199.0" x2="2788.4" y2="1202.2" stroke="#3c3c3c" stroke-width="1.8"/>
<line x1="2804.1" y1="1199.0" x2="2804.1" y2="1202.2" stroke="#3c3c3c" stroke-width="1.8"/>
<line x1="2819.8" y1="1199.0" x2="2819.8" y2="1207.4" stroke="#3c3c3c" stroke-width="2"/>
<text x="2818.6" y="1224.4" font-size="16" fill="#333333" text-anchor="middle" textLength="32.5" lengthAdjust="spacingAndGlyphs" stroke="#333333" stroke-width="0.15">8.75</text>
<line x1="2835.5" y1="1199.0" x2="2835.5" y2="1202.2" stroke="#3c3c3c" stroke-width="1.8"/>
<line x1="2851.2" y1="1199.0" x2="2851.2" y2="1202.2" stroke="#3c3c3c" stroke-width="1.8"/>
<line x1="2866.9" y1="1199.0" x2="2866.9" y2="1202.2" stroke="#3c3c3c" stroke-width="1.8"/>
<line x1="2882.6" y1="1199.0" x2="2882.6" y2="1202.2" stroke="#3c3c3c" stroke-width="1.8"/>
<line x1="2898.3" y1="1199.0" x2="2898.3" y2="1207.4" stroke="#3c3c3c" stroke-width="2"/>
<text x="2897.1" y="1224.4" font-size="16" fill="#333333" text-anchor="middle" textLength="32.5" lengthAdjust="spacingAndGlyphs" stroke="#333333" stroke-width="0.15">9.00</text>
<line x1="2914.0" y1="1199.0" x2="2914.0" y2="1202.2" stroke="#3c3c3c" stroke-width="1.8"/>
<line x1="2929.7" y1="1199.0" x2="2929.7" y2="1202.2" stroke="#3c3c3c" stroke-width="1.8"/>
<line x1="2945.4" y1="1199.0" x2="2945.4" y2="1202.2" stroke="#3c3c3c" stroke-width="1.8"/>
<line x1="2961.0" y1="1199.0" x2="2961.0" y2="1202.2" stroke="#3c3c3c" stroke-width="1.8"/>
<line x1="2976.7" y1="1199.0" x2="2976.7" y2="1207.4" stroke="#3c3c3c" stroke-width="2"/>
<line x1="2992.4" y1="1199.0" x2="2992.4" y2="1202.2" stroke="#3c3c3c" stroke-width="1.8"/>
<line x1="3000.7" y1="1199.0" x2="3000.7" y2="1207.4" stroke="#3c3c3c" stroke-width="2"/>
<text x="2998.5" y="1224.4" font-size="16" fill="#333333" text-anchor="middle" textLength="32.5" lengthAdjust="spacingAndGlyphs" stroke="#333333" stroke-width="0.15">9.32</text>
<polyline points="72.5,1130.2 195.0,1130.2 198.0,1131.7 242.0,1131.7 245.0,1130.4 780.0,1131.5 804.8,1130.5 816.7,1144.4 824.7,1135.5 833.6,1130.5 859.4,1130.5 870.4,1128.0 885.3,1130.5 920.0,1131.5 1400.0,1130.5 1511.2,1130.5 1527.1,1128.4 1533.4,1124.4 1543.0,1123.6 1558.8,1127.6 1568.4,1130.5 1650.0,1130.5 1990.0,1131.0 1990.0,1131.0 1993.0,1131.0 1996.0,1131.0 1999.0,1131.0 2002.0,1131.0 2005.0,1131.0 2008.0,1131.0 2011.0,1131.0 2014.0,1131.0 2017.0,1131.0 2020.0,1131.0 2023.0,1131.0 2026.0,1131.0 2027.0,1131.0 2028.0,1131.0 2029.0,1131.0 2030.0,1131.0 2031.0,1131.0 2032.0,1131.0 2033.0,1131.0 2034.0,1131.0 2035.0,1131.0 2036.0,1131.0 2037.0,1131.0 2038.0,1131.0 2039.0,1131.0 2040.0,1131.0 2041.0,1131.0 2042.0,1131.0 2043.0,1131.0 2044.0,1131.0 2045.0,1131.0 2046.0,1131.0 2047.0,1131.0 2048.0,1131.0 2049.0,1131.0 2050.0,1131.0 2051.0,1130.9 2052.0,1130.9 2053.0,1130.8 2054.0,1130.7 2055.0,1130.6 2056.0,1130.3 2057.0,1130.0 2058.0,1129.5 2059.0,1128.8 2060.0,1127.9 2061.0,1126.6 2062.0,1124.9 2063.0,1122.7 2064.0,1119.9 2065.0,1116.3 2066.0,1111.8 2067.0,1106.4 2068.0,1099.9 2069.0,1092.3 2070.0,1083.5 2071.0,1073.5 2072.0,1062.2 2073.0,1049.9 2074.0,1036.5 2075.0,1022.3 2076.0,1007.5 2077.0,992.2 2078.0,976.7 2079.0,961.3 2080.0,946.4 2081.0,932.0 2082.0,918.5 2083.0,906.2 2084.0,895.0 2085.0,885.3 2086.0,877.1 2087.0,870.3 2088.0,865.0 2089.0,861.1 2090.0,858.4 2091.0,856.8 2092.0,856.1 2093.0,856.0 2094.0,856.8 2095.0,859.0 2096.0,862.5 2097.0,867.1 2098.0,872.8 2099.0,879.5 2100.0,886.9 2101.0,895.0 2102.0,903.6 2103.0,912.7 2104.0,922.1 2105.0,931.8 2106.0,941.6 2107.0,951.5 2108.0,961.4 2109.0,971.3 2110.0,981.0 2111.0,990.5 2112.0,999.9 2113.0,1008.9 2114.0,1017.7 2115.0,1026.1 2116.0,1034.2 2117.0,1041.9 2118.0,1049.2 2119.0,1056.1 2120.0,1062.7 2121.0,1068.8 2122.0,1074.6 2123.0,1079.9 2124.0,1084.9 2125.0,1089.5 2126.0,1093.8 2127.0,1097.7 2128.0,1101.3 2129.0,1104.6 2130.0,1107.6 2131.0,1110.3 2132.0,1112.7 2133.0,1114.9 2134.0,1116.9 2135.0,1118.7 2136.0,1120.2 2137.0,1121.7 2138.0,1122.9 2139.0,1124.0 2140.0,1125.0 2141.0,1125.8 2142.0,1126.6 2143.0,1127.2 2144.0,1127.8 2145.0,1128.3 2146.0,1128.7 2147.0,1129.0 2148.0,1129.4 2149.0,1129.6 2150.0,1129.8 2151.0,1130.0 2152.0,1130.2 2153.0,1130.3 2154.0,1130.5 2155.0,1130.5 2156.0,1130.6 2157.0,1130.7 2158.0,1130.8 2159.0,1130.8 2160.0,1130.8 2161.0,1130.9 2162.0,1130.9 2163.0,1130.9 2166.0,1131.0 2169.0,1131.0 2172.0,1131.0 2175.0,1131.0 2178.0,1131.0 2181.0,1131.0 2184.0,1131.0 2187.0,1131.0 2190.0,1131.0 2193.0,1131.0 2196.0,1131.0 2199.0,1131.0 2202.0,1131.0 2205.0,1131.0 2208.0,1131.0 2211.0,1131.0 2214.0,1131.0 2217.0,1131.0 2220.0,1131.0 2223.0,1131.0 2226.0,1131.0 2229.0,1131.0 2232.0,1131.0 2235.0,1131.0 2238.0,1131.0 2583.5,1131.6" fill="none" stroke="#5050ff" stroke-width="2.0" stroke-linejoin="round"/>
<polyline points="72.5,1119.2 93.0,1119.2 96.0,1120.7 780.0,1119.6 802.8,1119.6 809.8,1131.5 815.7,1142.4 822.7,1129.5 831.6,1121.6 839.6,1119.6 862.4,1119.6 864.4,1118.1 879.3,1118.1 889.2,1121.1 917.0,1121.1 920.0,1120.6 1400.0,1119.3 1454.0,1119.3 1463.5,1121.2 1479.4,1120.4 1511.2,1119.3 1523.9,1112.5 1533.4,1108.5 1541.4,1110.1 1558.8,1116.4 1571.5,1119.3 1650.0,1119.3 1990.0,1120.3 1990.0,1120.3 1993.0,1120.3 1996.0,1120.3 1999.0,1120.3 2002.0,1120.3 2005.0,1120.3 2008.0,1120.3 2011.0,1120.3 2014.0,1120.3 2017.0,1120.3 2020.0,1120.3 2023.0,1120.3 2024.0,1120.3 2025.0,1120.3 2026.0,1120.3 2027.0,1120.3 2028.0,1120.3 2029.0,1120.3 2030.0,1120.3 2031.0,1120.3 2032.0,1120.3 2033.0,1120.3 2034.0,1120.3 2035.0,1120.3 2036.0,1120.3 2037.0,1120.3 2038.0,1120.3 2039.0,1120.3 2040.0,1120.3 2041.0,1120.3 2042.0,1120.2 2043.0,1120.2 2044.0,1120.2 2045.0,1120.1 2046.0,1120.0 2047.0,1119.8 2048.0,1119.6 2049.0,1119.3 2050.0,1118.8 2051.0,1118.2 2052.0,1117.4 2053.0,1116.2 2054.0,1114.7 2055.0,1112.8 2056.0,1110.3 2057.0,1107.2 2058.0,1103.4 2059.0,1098.6 2060.0,1092.9 2061.0,1086.1 2062.0,1078.0 2063.0,1068.7 2064.0,1058.0 2065.0,1046.0 2066.0,1032.6 2067.0,1017.8 2068.0,1001.7 2069.0,984.5 2070.0,966.3 2071.0,947.3 2072.0,927.7 2073.0,907.9 2074.0,887.9 2075.0,868.2 2076.0,849.0 2077.0,830.6 2078.0,813.1 2079.0,797.0 2080.0,782.2 2081.0,768.9 2082.0,757.4 2083.0,747.5 2084.0,739.3 2085.0,732.8 2086.0,727.8 2087.0,724.3 2088.0,722.1 2089.0,720.9 2090.0,720.5 2091.0,720.8 2092.0,722.7 2093.0,726.4 2094.0,731.7 2095.0,738.5 2096.0,746.6 2097.0,755.8 2098.0,766.0 2099.0,777.1 2100.0,788.8 2101.0,801.1 2102.0,813.9 2103.0,827.0 2104.0,840.3 2105.0,853.8 2106.0,867.3 2107.0,880.8 2108.0,894.1 2109.0,907.3 2110.0,920.2 2111.0,932.8 2112.0,945.1 2113.0,956.9 2114.0,968.4 2115.0,979.4 2116.0,989.9 2117.0,1000.0 2118.0,1009.6 2119.0,1018.6 2120.0,1027.2 2121.0,1035.2 2122.0,1042.8 2123.0,1049.8 2124.0,1056.4 2125.0,1062.5 2126.0,1068.1 2127.0,1073.4 2128.0,1078.2 2129.0,1082.6 2130.0,1086.6 2131.0,1090.3 2132.0,1093.7 2133.0,1096.7 2134.0,1099.4 2135.0,1101.9 2136.0,1104.1 2137.0,1106.1 2138.0,1107.9 2139.0,1109.5 2140.0,1110.9 2141.0,1112.1 2142.0,1113.2 2143.0,1114.2 2144.0,1115.1 2145.0,1115.8 2146.0,1116.5 2147.0,1117.0 2148.0,1117.5 2149.0,1117.9 2150.0,1118.3 2151.0,1118.6 2152.0,1118.9 2153.0,1119.1 2154.0,1119.3 2155.0,1119.5 2156.0,1119.6 2157.0,1119.7 2158.0,1119.8 2159.0,1119.9 2160.0,1120.0 2161.0,1120.0 2164.0,1120.2 2167.0,1120.2 2170.0,1120.3 2173.0,1120.3 2176.0,1120.3 2179.0,1120.3 2182.0,1120.3 2185.0,1120.3 2188.0,1120.3 2191.0,1120.3 2194.0,1120.3 2197.0,1120.3 2200.0,1120.3 2203.0,1120.3 2206.0,1120.3 2209.0,1120.3 2212.0,1120.3 2215.0,1120.3 2218.0,1120.3 2221.0,1120.3 2224.0,1120.3 2227.0,1120.3 2230.0,1120.3 2233.0,1120.3 2236.0,1120.3 2239.0,1120.3 2583.5,1120.8" fill="none" stroke="#ff48ff" stroke-width="2.0" stroke-linejoin="round"/>
<polyline points="72.5,1108.2 99.0,1108.2 102.0,1109.9 780.0,1109.7 784.0,1108.7 800.9,1108.7 808.8,1124.5 814.8,1143.4 819.7,1131.5 826.7,1117.6 835.6,1109.7 861.4,1108.7 871.4,1103.2 879.3,1106.7 892.2,1110.6 920.0,1109.7 1400.0,1108.8 1488.9,1108.8 1495.3,1110.1 1506.4,1107.7 1514.4,1098.2 1523.9,1093.9 1530.2,1094.7 1542.9,1099.8 1558.8,1106.1 1568.4,1108.8 1638.2,1108.8 1643.0,1110.1 1650.0,1110.1 1990.0,1109.4 1990.0,1109.4 1993.0,1109.4 1996.0,1109.4 1999.0,1109.4 2002.0,1109.4 2005.0,1109.4 2008.0,1109.4 2011.0,1109.4 2014.0,1109.4 2017.0,1109.4 2018.0,1109.4 2019.0,1109.4 2020.0,1109.4 2021.0,1109.4 2022.0,1109.4 2023.0,1109.4 2024.0,1109.4 2025.0,1109.4 2026.0,1109.4 2027.0,1109.4 2028.0,1109.4 2029.0,1109.4 2030.0,1109.4 2031.0,1109.4 2032.0,1109.4 2033.0,1109.4 2034.0,1109.4 2035.0,1109.4 2036.0,1109.4 2037.0,1109.4 2038.0,1109.4 2039.0,1109.4 2040.0,1109.3 2041.0,1109.3 2042.0,1109.2 2043.0,1109.1 2044.0,1108.9 2045.0,1108.6 2046.0,1108.1 2047.0,1107.5 2048.0,1106.6 2049.0,1105.3 2050.0,1103.5 2051.0,1101.1 2052.0,1097.9 2053.0,1093.7 2054.0,1088.3 2055.0,1081.4 2056.0,1072.9 2057.0,1062.5 2058.0,1050.1 2059.0,1035.3 2060.0,1018.2 2061.0,998.5 2062.0,976.4 2063.0,951.9 2064.0,925.3 2065.0,896.6 2066.0,866.4 2067.0,835.0 2068.0,802.9 2069.0,770.6 2070.0,738.7 2071.0,707.7 2072.0,678.1 2073.0,650.5 2074.0,625.2 2075.0,602.5 2076.0,582.7 2077.0,565.9 2078.0,552.2 2079.0,541.5 2080.0,533.5 2081.0,528.2 2082.0,525.0 2083.0,523.6 2084.0,523.3 2085.0,524.4 2086.0,527.6 2087.0,532.8 2088.0,539.7 2089.0,548.2 2090.0,558.2 2091.0,569.4 2092.0,581.8 2093.0,595.1 2094.0,609.3 2095.0,624.3 2096.0,639.8 2097.0,655.9 2098.0,672.3 2099.0,689.1 2100.0,706.0 2101.0,723.1 2102.0,740.1 2103.0,757.2 2104.0,774.1 2105.0,790.8 2106.0,807.3 2107.0,823.5 2108.0,839.3 2109.0,854.8 2110.0,869.9 2111.0,884.4 2112.0,898.6 2113.0,912.2 2114.0,925.3 2115.0,937.8 2116.0,949.8 2117.0,961.3 2118.0,972.2 2119.0,982.5 2120.0,992.3 2121.0,1001.6 2122.0,1010.3 2123.0,1018.5 2124.0,1026.2 2125.0,1033.4 2126.0,1040.1 2127.0,1046.3 2128.0,1052.1 2129.0,1057.5 2130.0,1062.4 2131.0,1067.0 2132.0,1071.2 2133.0,1075.1 2134.0,1078.6 2135.0,1081.8 2136.0,1084.8 2137.0,1087.4 2138.0,1089.9 2139.0,1092.0 2140.0,1094.0 2141.0,1095.8 2142.0,1097.4 2143.0,1098.8 2144.0,1100.1 2145.0,1101.3 2146.0,1102.3 2147.0,1103.2 2148.0,1104.0 2149.0,1104.7 2150.0,1105.3 2151.0,1105.9 2152.0,1106.3 2153.0,1106.8 2154.0,1107.1 2157.0,1108.0 2160.0,1108.5 2163.0,1108.9 2166.0,1109.1 2169.0,1109.2 2172.0,1109.3 2175.0,1109.3 2178.0,1109.4 2181.0,1109.4 2184.0,1109.4 2187.0,1109.4 2190.0,1109.4 2193.0,1109.4 2196.0,1109.4 2199.0,1109.4 2202.0,1109.4 2205.0,1109.4 2208.0,1109.4 2211.0,1109.4 2214.0,1109.4 2217.0,1109.4 2220.0,1109.4 2223.0,1109.4 2226.0,1109.4 2229.0,1109.4 2232.0,1109.4 2235.0,1109.4 2238.0,1109.4 2583.5,1109.8" fill="none" stroke="#aa5c5c" stroke-width="2.0" stroke-linejoin="round"/>
<polyline points="72.5,1139.8 110.0,1139.8 113.0,1141.0 305.0,1141.0 309.0,1137.5 780.0,1137.3 784.0,1136.5 795.9,1136.5 803.8,1139.4 807.8,1154.3 808.8,1164.3 814.8,1175.2 819.7,1165.3 825.7,1147.4 833.6,1138.4 839.6,1136.5 859.4,1136.5 870.4,1131.0 887.2,1137.5 896.2,1139.4 908.1,1139.4 911.1,1137.5 920.0,1137.5 1400.0,1137.9 1442.9,1137.9 1447.6,1136.3 1495.3,1137.1 1508.0,1134.7 1515.9,1125.2 1525.5,1122.0 1535.0,1123.6 1550.9,1131.5 1574.7,1137.9 1650.0,1137.9 1990.0,1138.2 1990.0,1138.2 1993.0,1138.2 1996.0,1138.2 1999.0,1138.2 2002.0,1138.2 2005.0,1138.2 2008.0,1138.2 2011.0,1138.2 2014.0,1138.2 2015.0,1138.2 2016.0,1138.2 2017.0,1138.2 2018.0,1138.2 2019.0,1138.2 2020.0,1138.2 2021.0,1138.2 2022.0,1138.2 2023.0,1138.2 2024.0,1138.2 2025.0,1138.2 2026.0,1138.2 2027.0,1138.2 2028.0,1138.2 2029.0,1138.2 2030.0,1138.2 2031.0,1138.2 2032.0,1138.2 2033.0,1138.2 2034.0,1138.2 2035.0,1138.2 2036.0,1138.2 2037.0,1138.2 2038.0,1138.2 2039.0,1138.1 2040.0,1138.1 2041.0,1138.0 2042.0,1137.9 2043.0,1137.7 2044.0,1137.4 2045.0,1136.9 2046.0,1136.2 2047.0,1135.3 2048.0,1133.9 2049.0,1132.0 2050.0,1129.5 2051.0,1126.1 2052.0,1121.7 2053.0,1115.9 2054.0,1108.7 2055.0,1099.8 2056.0,1088.9 2057.0,1075.7 2058.0,1060.3 2059.0,1042.3 2060.0,1021.8 2061.0,998.8 2062.0,973.4 2063.0,945.8 2064.0,916.3 2065.0,885.3 2066.0,853.2 2067.0,820.6 2068.0,788.0 2069.0,755.9 2070.0,725.0 2071.0,695.8 2072.0,668.6 2073.0,644.0 2074.0,622.2 2075.0,603.4 2076.0,587.7 2077.0,575.2 2078.0,565.6 2079.0,558.8 2080.0,554.4 2081.0,552.1 2082.0,551.3 2083.0,551.6 2084.0,553.9 2085.0,558.2 2086.0,564.4 2087.0,572.4 2088.0,581.9 2089.0,592.9 2090.0,605.0 2091.0,618.3 2092.0,632.4 2093.0,647.4 2094.0,663.1 2095.0,679.3 2096.0,695.9 2097.0,712.9 2098.0,730.1 2099.0,747.4 2100.0,764.8 2101.0,782.2 2102.0,799.4 2103.0,816.5 2104.0,833.3 2105.0,849.8 2106.0,866.0 2107.0,881.8 2108.0,897.2 2109.0,912.0 2110.0,926.4 2111.0,940.3 2112.0,953.6 2113.0,966.4 2114.0,978.6 2115.0,990.3 2116.0,1001.3 2117.0,1011.8 2118.0,1021.7 2119.0,1031.1 2120.0,1039.9 2121.0,1048.2 2122.0,1055.9 2123.0,1063.2 2124.0,1069.9 2125.0,1076.1 2126.0,1082.0 2127.0,1087.3 2128.0,1092.3 2129.0,1096.8 2130.0,1101.0 2131.0,1104.8 2132.0,1108.3 2133.0,1111.5 2134.0,1114.4 2135.0,1117.0 2136.0,1119.4 2137.0,1121.6 2138.0,1123.5 2139.0,1125.2 2140.0,1126.8 2141.0,1128.2 2142.0,1129.4 2143.0,1130.5 2144.0,1131.5 2145.0,1132.4 2146.0,1133.1 2147.0,1133.8 2148.0,1134.4 2149.0,1134.9 2150.0,1135.4 2151.0,1135.8 2152.0,1136.1 2153.0,1136.4 2156.0,1137.1 2159.0,1137.5 2162.0,1137.8 2165.0,1138.0 2168.0,1138.1 2171.0,1138.1 2174.0,1138.2 2177.0,1138.2 2180.0,1138.2 2183.0,1138.2 2186.0,1138.2 2189.0,1138.2 2192.0,1138.2 2195.0,1138.2 2198.0,1138.2 2201.0,1138.2 2204.0,1138.2 2207.0,1138.2 2210.0,1138.2 2213.0,1138.2 2216.0,1138.2 2219.0,1138.2 2222.0,1138.2 2225.0,1138.2 2228.0,1138.2 2231.0,1138.2 2234.0,1138.2 2237.0,1138.2 2240.0,1138.2 2644.0,1138.2 2646.0,1139.5 2693.0,1139.5 2696.0,1138.2 3000.0,1138.2" fill="none" stroke="#555555" stroke-width="2.0" stroke-linejoin="round"/>
<polyline points="72.5,1098.9 226.0,1098.9 229.0,1100.4 325.0,1100.4 328.0,1099.0 780.0,1098.7 799.9,1098.7 805.8,1115.6 813.8,1150.4 819.7,1135.5 825.7,1119.6 835.6,1098.7 849.5,1098.7 862.4,1096.7 871.4,1090.8 879.3,1093.8 889.2,1098.7 899.2,1100.7 920.0,1100.2 1400.0,1099.5 1496.9,1099.5 1503.2,1093.4 1509.6,1082.3 1517.5,1078.3 1523.9,1078.8 1535.0,1083.9 1550.9,1091.8 1566.8,1096.6 1581.1,1099.5 1650.0,1099.5 1990.0,1098.6 1990.0,1098.6 1993.0,1098.6 1996.0,1098.6 1999.0,1098.6 2002.0,1098.6 2005.0,1098.6 2008.0,1098.6 2011.0,1098.6 2012.0,1098.6 2013.0,1098.6 2014.0,1098.6 2015.0,1098.6 2016.0,1098.6 2017.0,1098.6 2018.0,1098.6 2019.0,1098.6 2020.0,1098.6 2021.0,1098.6 2022.0,1098.6 2023.0,1098.6 2024.0,1098.6 2025.0,1098.6 2026.0,1098.6 2027.0,1098.6 2028.0,1098.6 2029.0,1098.6 2030.0,1098.6 2031.0,1098.6 2032.0,1098.5 2033.0,1098.5 2034.0,1098.4 2035.0,1098.3 2036.0,1098.2 2037.0,1097.9 2038.0,1097.6 2039.0,1097.0 2040.0,1096.2 2041.0,1095.1 2042.0,1093.6 2043.0,1091.5 2044.0,1088.6 2045.0,1084.8 2046.0,1079.9 2047.0,1073.6 2048.0,1065.6 2049.0,1055.8 2050.0,1043.7 2051.0,1029.2 2052.0,1012.1 2053.0,992.2 2054.0,969.3 2055.0,943.5 2056.0,914.8 2057.0,883.3 2058.0,849.4 2059.0,813.4 2060.0,775.7 2061.0,736.8 2062.0,697.4 2063.0,658.1 2064.0,619.4 2065.0,582.1 2066.0,546.7 2067.0,513.7 2068.0,483.6 2069.0,456.8 2070.0,433.4 2071.0,413.6 2072.0,397.4 2073.0,384.8 2074.0,375.5 2075.0,369.2 2076.0,365.5 2077.0,363.8 2078.0,363.5 2079.0,364.6 2080.0,367.8 2081.0,373.0 2082.0,379.9 2083.0,388.5 2084.0,398.5 2085.0,409.8 2086.0,422.4 2087.0,436.0 2088.0,450.6 2089.0,466.0 2090.0,482.2 2091.0,499.0 2092.0,516.3 2093.0,534.1 2094.0,552.3 2095.0,570.7 2096.0,589.3 2097.0,608.1 2098.0,626.9 2099.0,645.7 2100.0,664.4 2101.0,683.0 2102.0,701.4 2103.0,719.6 2104.0,737.5 2105.0,755.1 2106.0,772.3 2107.0,789.2 2108.0,805.6 2109.0,821.6 2110.0,837.1 2111.0,852.1 2112.0,866.6 2113.0,880.7 2114.0,894.1 2115.0,907.1 2116.0,919.5 2117.0,931.4 2118.0,942.7 2119.0,953.5 2120.0,963.8 2121.0,973.5 2122.0,982.7 2123.0,991.4 2124.0,999.6 2125.0,1007.4 2126.0,1014.6 2127.0,1021.4 2128.0,1027.8 2129.0,1033.8 2130.0,1039.3 2131.0,1044.5 2132.0,1049.3 2133.0,1053.7 2134.0,1057.8 2135.0,1061.6 2136.0,1065.1 2137.0,1068.4 2138.0,1071.3 2139.0,1074.0 2140.0,1076.5 2141.0,1078.8 2142.0,1080.8 2143.0,1082.7 2144.0,1084.4 2145.0,1085.9 2146.0,1087.3 2147.0,1088.6 2148.0,1089.7 2151.0,1092.5 2154.0,1094.4 2157.0,1095.8 2160.0,1096.8 2163.0,1097.4 2166.0,1097.8 2169.0,1098.1 2172.0,1098.3 2175.0,1098.4 2178.0,1098.5 2181.0,1098.5 2184.0,1098.6 2187.0,1098.6 2190.0,1098.6 2193.0,1098.6 2196.0,1098.6 2199.0,1098.6 2202.0,1098.6 2205.0,1098.6 2208.0,1098.6 2211.0,1098.6 2214.0,1098.6 2217.0,1098.6 2220.0,1098.6 2223.0,1098.6 2226.0,1098.6 2229.0,1098.6 2232.0,1098.6 2235.0,1098.6 2238.0,1098.6 2583.5,1100.0" fill="none" stroke="#4aa64a" stroke-width="2.0" stroke-linejoin="round"/>
<polyline points="72.5,1087.8 690.0,1087.8 697.0,1086.2 704.5,1084.6 712.0,1086.2 718.0,1087.8 780.0,1088.3 786.0,1086.3 795.9,1086.3 799.9,1089.8 801.4,1099.7 803.8,1121.6 810.5,1153.0 814.8,1139.4 819.7,1115.6 825.7,1089.8 832.6,1082.8 837.1,1080.9 841.6,1083.8 857.5,1083.3 869.4,1074.9 879.3,1082.3 888.2,1087.8 897.2,1089.8 920.0,1089.8 1400.0,1087.3 1468.3,1087.3 1482.6,1077.5 1488.9,1075.9 1495.3,1075.2 1499.3,1071.2 1509.6,1060.4 1525.5,1067.2 1542.9,1077.5 1558.8,1084.7 1568.4,1086.3 1579.5,1087.3 1650.0,1087.3 1990.0,1087.7 1990.0,1087.7 1993.0,1087.7 1996.0,1087.7 1999.0,1087.7 2002.0,1087.7 2005.0,1087.7 2006.0,1087.7 2007.0,1087.7 2008.0,1087.7 2009.0,1087.7 2010.0,1087.7 2011.0,1087.7 2012.0,1087.7 2013.0,1087.7 2014.0,1087.7 2015.0,1087.7 2016.0,1087.7 2017.0,1087.7 2018.0,1087.7 2019.0,1087.7 2020.0,1087.7 2021.0,1087.7 2022.0,1087.7 2023.0,1087.7 2024.0,1087.7 2025.0,1087.7 2026.0,1087.6 2027.0,1087.6 2028.0,1087.5 2029.0,1087.4 2030.0,1087.1 2031.0,1086.8 2032.0,1086.4 2033.0,1085.7 2034.0,1084.8 2035.0,1083.4 2036.0,1081.6 2037.0,1079.1 2038.0,1075.7 2039.0,1071.3 2040.0,1065.6 2041.0,1058.3 2042.0,1049.1 2043.0,1037.7 2044.0,1023.9 2045.0,1007.4 2046.0,987.9 2047.0,965.3 2048.0,939.4 2049.0,910.2 2050.0,877.7 2051.0,842.1 2052.0,803.8 2053.0,763.0 2054.0,720.3 2055.0,676.2 2056.0,631.4 2057.0,586.6 2058.0,542.5 2059.0,499.7 2060.0,458.9 2061.0,420.7 2062.0,385.6 2063.0,354.1 2064.0,326.4 2065.0,302.7 2066.0,283.1 2067.0,267.6 2068.0,255.8 2069.0,247.5 2070.0,242.3 2071.0,239.6 2072.0,238.7 2073.0,239.1 2074.0,241.3 2075.0,245.5 2076.0,251.3 2077.0,258.8 2078.0,267.8 2079.0,278.0 2080.0,289.5 2081.0,302.1 2082.0,315.8 2083.0,330.3 2084.0,345.7 2085.0,361.8 2086.0,378.5 2087.0,395.8 2088.0,413.6 2089.0,431.8 2090.0,450.4 2091.0,469.2 2092.0,488.2 2093.0,507.4 2094.0,526.7 2095.0,546.1 2096.0,565.4 2097.0,584.7 2098.0,603.9 2099.0,622.9 2100.0,641.8 2101.0,660.4 2102.0,678.7 2103.0,696.8 2104.0,714.5 2105.0,731.9 2106.0,748.8 2107.0,765.4 2108.0,781.6 2109.0,797.3 2110.0,812.6 2111.0,827.4 2112.0,841.7 2113.0,855.5 2114.0,868.8 2115.0,881.7 2116.0,894.0 2117.0,905.8 2118.0,917.2 2119.0,928.0 2120.0,938.4 2121.0,948.2 2122.0,957.6 2123.0,966.5 2124.0,975.0 2125.0,983.0 2126.0,990.5 2127.0,997.7 2128.0,1004.4 2129.0,1010.7 2130.0,1016.7 2131.0,1022.2 2132.0,1027.5 2133.0,1032.3 2134.0,1036.9 2135.0,1041.1 2136.0,1045.1 2137.0,1048.8 2138.0,1052.2 2139.0,1055.3 2140.0,1058.2 2141.0,1060.9 2142.0,1063.4 2143.0,1065.7 2146.0,1071.4 2149.0,1075.8 2152.0,1079.2 2155.0,1081.6 2158.0,1083.4 2161.0,1084.7 2164.0,1085.7 2167.0,1086.3 2170.0,1086.8 2173.0,1087.1 2176.0,1087.3 2179.0,1087.5 2182.0,1087.5 2185.0,1087.6 2188.0,1087.6 2191.0,1087.7 2194.0,1087.7 2197.0,1087.7 2200.0,1087.7 2203.0,1087.7 2206.0,1087.7 2209.0,1087.7 2212.0,1087.7 2215.0,1087.7 2218.0,1087.7 2221.0,1087.7 2224.0,1087.7 2227.0,1087.7 2230.0,1087.7 2233.0,1087.7 2236.0,1087.7 2239.0,1087.7 2583.5,1088.0" fill="none" stroke="#9c9642" stroke-width="2.0" stroke-linejoin="round"/>
<line x1="1452.4" y1="1087.2" x2="1603.3" y2="1087.2" stroke="#ff3c3c" stroke-width="2"/>
<line x1="1452.4" y1="1079.0" x2="1452.4" y2="1087.5" stroke="#3c3cff" stroke-width="2"/>
<line x1="1603.3" y1="1087.0" x2="1603.3" y2="1096.6" stroke="#3c3cff" stroke-width="2"/>
<line x1="2021.0" y1="1087.7" x2="2232.6" y2="1087.7" stroke="#ff3c3c" stroke-width="2"/>
<line x1="2021.0" y1="1078.8" x2="2021.0" y2="1088.0" stroke="#3c3cff" stroke-width="2"/>
<line x1="2232.6" y1="1087.5" x2="2232.6" y2="1094.7" stroke="#3c3cff" stroke-width="2"/>
<text x="74.0" y="1078.0" font-size="11" fill="#a29a4a" stroke="#a29a4a" stroke-width="0.15">6</text>
<text x="74.0" y="1091.0" font-size="11" fill="#4a9e4a" stroke="#4a9e4a" stroke-width="0.15">5</text>
<text x="74.0" y="1100.0" font-size="11" fill="#aa6464" stroke="#aa6464" stroke-width="0.15">4</text>
<text x="74.0" y="1110.0" font-size="11" fill="#ff5cff" stroke="#ff5cff" stroke-width="0.15">3</text>
<text x="74.0" y="1121.0" font-size="11" fill="#5a5aff" stroke="#5a5aff" stroke-width="0.15">2</text>
<text x="74.0" y="1132.0" font-size="11" fill="#585858" stroke="#585858" stroke-width="0.15">1</text>
<text x="1512.0" y="1057.0" font-size="14" fill="#333333" textLength="63.5" lengthAdjust="spacingAndGlyphs" stroke="#333333" stroke-width="0.15">1 - 4.579</text>
<text x="2071.5" y="235.0" font-size="14" fill="#333333" textLength="65.0" lengthAdjust="spacingAndGlyphs" stroke="#333333" stroke-width="0.15">2 - 6.367</text>
<text x="1438.9" y="1005.3" font-size="28" fill="#111111" font-weight="bold" textLength="158.8" lengthAdjust="spacingAndGlyphs">meldonium</text>
<text x="2133.4" y="277.8" font-size="28" fill="#111111" font-weight="bold" textLength="155.6" lengthAdjust="spacingAndGlyphs">metoprolol</text>
<rect x="16.7" y="1235.0" width="3007.9" height="10.5" fill="#f4f4f4"/>
<rect x="16.7" y="1245.3" width="3005.9" height="3.4" fill="#5c5c5c"/>
<rect x="16.7" y="1248.7" width="3005.9" height="25.5" fill="#efefef"/>
<rect x="16.7" y="1274.2" width="3005.9" height="150.8" fill="#ffffff"/>
<line x1="16.7" y1="1274.4" x2="3022.6" y2="1274.4" stroke="#cfcfcf" stroke-width="1.6"/>
<line x1="16.7" y1="1301.9" x2="3022.6" y2="1301.9" stroke="#cfcfcf" stroke-width="1.6"/>
<line x1="16.7" y1="1355.4" x2="3022.6" y2="1355.4" stroke="#cfcfcf" stroke-width="1.6"/>
<line x1="16.7" y1="1382.2" x2="3022.6" y2="1382.2" stroke="#cfcfcf" stroke-width="1.6"/>
<line x1="16.7" y1="1408.6" x2="3022.6" y2="1408.6" stroke="#cfcfcf" stroke-width="1.6"/>
<line x1="101.3" y1="1248.7" x2="101.3" y2="1425.0" stroke="#cfcfcf" stroke-width="1.8"/>
<line x1="283.0" y1="1248.7" x2="283.0" y2="1425.0" stroke="#cfcfcf" stroke-width="1.8"/>
<line x1="396.5" y1="1248.7" x2="396.5" y2="1425.0" stroke="#cfcfcf" stroke-width="1.8"/>
<line x1="514.5" y1="1248.7" x2="514.5" y2="1425.0" stroke="#cfcfcf" stroke-width="1.8"/>
<line x1="614.6" y1="1248.7" x2="614.6" y2="1425.0" stroke="#cfcfcf" stroke-width="1.8"/>
<line x1="714.8" y1="1248.7" x2="714.8" y2="1425.0" stroke="#cfcfcf" stroke-width="1.8"/>
<line x1="816.0" y1="1248.7" x2="816.0" y2="1425.0" stroke="#cfcfcf" stroke-width="1.8"/>
<line x1="916.2" y1="1248.7" x2="916.2" y2="1425.0" stroke="#cfcfcf" stroke-width="1.8"/>
<line x1="1017.5" y1="1248.7" x2="1017.5" y2="1425.0" stroke="#cfcfcf" stroke-width="1.8"/>
<line x1="1154.0" y1="1248.7" x2="1154.0" y2="1425.0" stroke="#cfcfcf" stroke-width="1.8"/>
<line x1="1294.0" y1="1248.7" x2="1294.0" y2="1425.0" stroke="#cfcfcf" stroke-width="1.8"/>
<line x1="1394.6" y1="1248.7" x2="1394.6" y2="1425.0" stroke="#cfcfcf" stroke-width="1.8"/>
<line x1="1495.1" y1="1248.7" x2="1495.1" y2="1425.0" stroke="#cfcfcf" stroke-width="1.8"/>
<line x1="1595.7" y1="1248.7" x2="1595.7" y2="1425.0" stroke="#cfcfcf" stroke-width="1.8"/>
<line x1="1696.2" y1="1248.7" x2="1696.2" y2="1425.0" stroke="#cfcfcf" stroke-width="1.8"/>
<line x1="1796.8" y1="1248.7" x2="1796.8" y2="1425.0" stroke="#cfcfcf" stroke-width="1.8"/>
<line x1="1897.4" y1="1248.7" x2="1897.4" y2="1425.0" stroke="#cfcfcf" stroke-width="1.8"/>
<line x1="1997.9" y1="1248.7" x2="1997.9" y2="1425.0" stroke="#cfcfcf" stroke-width="1.8"/>
<line x1="2098.5" y1="1248.7" x2="2098.5" y2="1425.0" stroke="#cfcfcf" stroke-width="1.8"/>
<line x1="2199.0" y1="1248.7" x2="2199.0" y2="1425.0" stroke="#cfcfcf" stroke-width="1.8"/>
<line x1="2299.6" y1="1248.7" x2="2299.6" y2="1425.0" stroke="#cfcfcf" stroke-width="1.8"/>
<line x1="2400.2" y1="1248.7" x2="2400.2" y2="1425.0" stroke="#cfcfcf" stroke-width="1.8"/>
<line x1="2500.7" y1="1248.7" x2="2500.7" y2="1425.0" stroke="#cfcfcf" stroke-width="1.8"/>
<line x1="2601.3" y1="1248.7" x2="2601.3" y2="1425.0" stroke="#cfcfcf" stroke-width="1.8"/>
<line x1="2701.8" y1="1248.7" x2="2701.8" y2="1425.0" stroke="#cfcfcf" stroke-width="1.8"/>
<line x1="2802.4" y1="1248.7" x2="2802.4" y2="1425.0" stroke="#cfcfcf" stroke-width="1.8"/>
<line x1="2903.0" y1="1248.7" x2="2903.0" y2="1425.0" stroke="#cfcfcf" stroke-width="1.8"/>
<line x1="3003.5" y1="1248.7" x2="3003.5" y2="1425.0" stroke="#cfcfcf" stroke-width="1.8"/>
<line x1="16.7" y1="1328.7" x2="3022.6" y2="1328.7" stroke="#707070" stroke-width="2.2"/>
<line x1="3022.6" y1="1246.0" x2="3022.6" y2="1452.0" stroke="#707070" stroke-width="2"/>
<rect x="16.7" y="1274.2" width="998.8" height="52.2" fill="#0000ff"/>
<rect x="16.7" y="1326.4" width="998.8" height="3.8" fill="#000000"/>
<rect x="16.7" y="1330.2" width="998.8" height="49.6" fill="#ffffc0"/>
<rect x="16.7" y="1379.8" width="998.8" height="2.9" fill="#000000"/>
<rect x="16.7" y="1382.7" width="998.8" height="23.6" fill="#c0c0ff"/>
<rect x="16.7" y="1406.3" width="998.8" height="3.4" fill="#000000"/>
<rect x="1013.6" y="1274.2" width="3.9" height="135.5" fill="#000000"/>
<text x="59.0" y="1269.0" font-size="21.5" fill="#1a1a1a" text-anchor="middle" font-weight="bold">A</text>
<text x="192.2" y="1269.0" font-size="21.5" fill="#1a1a1a" text-anchor="middle" font-weight="bold">B</text>
<text x="339.8" y="1269.0" font-size="21.5" fill="#1a1a1a" text-anchor="middle" font-weight="bold">C</text>
<text x="455.5" y="1269.0" font-size="21.5" fill="#1a1a1a" text-anchor="middle" font-weight="bold">D</text>
<text x="564.5" y="1269.0" font-size="21.5" fill="#1a1a1a" text-anchor="middle" font-weight="bold">E</text>
<text x="664.7" y="1269.0" font-size="21.5" fill="#1a1a1a" text-anchor="middle" font-weight="bold">F</text>
<text x="765.4" y="1269.0" font-size="21.5" fill="#1a1a1a" text-anchor="middle" font-weight="bold">G</text>
<text x="866.1" y="1269.0" font-size="21.5" fill="#1a1a1a" text-anchor="middle" font-weight="bold">H</text>
<text x="966.9" y="1269.0" font-size="21.5" fill="#1a1a1a" text-anchor="middle" font-weight="bold">I</text>
<text x="1085.8" y="1269.0" font-size="21.5" fill="#1a1a1a" text-anchor="middle" font-weight="bold">J</text>
<text x="1224.0" y="1269.0" font-size="21.5" fill="#1a1a1a" text-anchor="middle" font-weight="bold">K</text>
<text x="1344.3" y="1269.0" font-size="21.5" fill="#1a1a1a" text-anchor="middle" font-weight="bold">L</text>
<text x="1444.8" y="1269.0" font-size="21.5" fill="#1a1a1a" text-anchor="middle" font-weight="bold">M</text>
<text x="1545.4" y="1269.0" font-size="21.5" fill="#1a1a1a" text-anchor="middle" font-weight="bold">N</text>
<text x="1646.0" y="1269.0" font-size="21.5" fill="#1a1a1a" text-anchor="middle" font-weight="bold">O</text>
<text x="1746.5" y="1269.0" font-size="21.5" fill="#1a1a1a" text-anchor="middle" font-weight="bold">P</text>
<text x="1847.1" y="1269.0" font-size="21.5" fill="#1a1a1a" text-anchor="middle" font-weight="bold">Q</text>
<text x="1947.6" y="1269.0" font-size="21.5" fill="#1a1a1a" text-anchor="middle" font-weight="bold">R</text>
<text x="2048.2" y="1269.0" font-size="21.5" fill="#1a1a1a" text-anchor="middle" font-weight="bold">S</text>
<text x="2148.8" y="1269.0" font-size="21.5" fill="#1a1a1a" text-anchor="middle" font-weight="bold">T</text>
<text x="2249.3" y="1269.0" font-size="21.5" fill="#1a1a1a" text-anchor="middle" font-weight="bold">U</text>
<text x="2349.9" y="1269.0" font-size="21.5" fill="#1a1a1a" text-anchor="middle" font-weight="bold">V</text>
<text x="2450.4" y="1269.0" font-size="21.5" fill="#1a1a1a" text-anchor="middle" font-weight="bold">W</text>
<text x="2551.0" y="1269.0" font-size="21.5" fill="#1a1a1a" text-anchor="middle" font-weight="bold">X</text>
<text x="2651.6" y="1269.0" font-size="21.5" fill="#1a1a1a" text-anchor="middle" font-weight="bold">Y</text>
<text x="2752.1" y="1269.0" font-size="21.5" fill="#1a1a1a" text-anchor="middle" font-weight="bold">Z</text>
<text x="2852.7" y="1269.0" font-size="21.5" fill="#1a1a1a" text-anchor="middle" font-weight="bold">AA</text>
<text x="2953.2" y="1269.0" font-size="21.5" fill="#1a1a1a" text-anchor="middle" font-weight="bold">AB</text>
<text x="55.9" y="1295.5" font-size="20" fill="#ffffff" text-anchor="middle" font-weight="bold" font-style="italic" textLength="31.0" lengthAdjust="spacingAndGlyphs">No.</text>
<text x="58.9" y="1322.0" font-size="20" fill="#ffffff" text-anchor="middle" font-weight="bold" font-style="italic" textLength="33.8" lengthAdjust="spacingAndGlyphs">n.a.</text>
<text x="190.7" y="1295.5" font-size="20" fill="#ffffff" text-anchor="middle" font-weight="bold" font-style="italic" textLength="99.4" lengthAdjust="spacingAndGlyphs">Peakname</text>
<text x="194.2" y="1322.0" font-size="20" fill="#ffffff" text-anchor="middle" font-weight="bold" font-style="italic" textLength="33.6" lengthAdjust="spacingAndGlyphs">n.a.</text>
<text x="342.3" y="1295.5" font-size="20" fill="#ffffff" text-anchor="middle" font-weight="bold" font-style="italic" textLength="85.7" lengthAdjust="spacingAndGlyphs">Ret.Time</text>
<text x="341.8" y="1322.0" font-size="20" fill="#ffffff" text-anchor="middle" font-weight="bold" font-style="italic" textLength="37.2" lengthAdjust="spacingAndGlyphs">min</text>
<text x="453.8" y="1295.5" font-size="20" fill="#ffffff" text-anchor="middle" font-weight="bold" font-style="italic" textLength="112.5" lengthAdjust="spacingAndGlyphs">Peak Width</text>
<text x="456.4" y="1322.0" font-size="20" fill="#ffffff" text-anchor="middle" font-weight="bold" font-style="italic" textLength="37.2" lengthAdjust="spacingAndGlyphs">min</text>
<text x="563.5" y="1295.5" font-size="20" fill="#ffffff" text-anchor="middle" font-weight="bold" font-style="italic" textLength="63.0" lengthAdjust="spacingAndGlyphs">Height</text>
<text x="567.6" y="1322.0" font-size="20" fill="#ffffff" text-anchor="middle" font-weight="bold" font-style="italic" textLength="48.5" lengthAdjust="spacingAndGlyphs">mAU</text>
<text x="664.7" y="1295.5" font-size="20" fill="#ffffff" text-anchor="middle" font-weight="bold" font-style="italic" textLength="44.4" lengthAdjust="spacingAndGlyphs">Type</text>
<text x="767.0" y="1295.5" font-size="20" fill="#ffffff" text-anchor="middle" font-weight="bold" font-style="italic" textLength="58.9" lengthAdjust="spacingAndGlyphs">Resol.</text>
<text x="768.5" y="1322.0" font-size="20" fill="#ffffff" text-anchor="middle" font-weight="bold" font-style="italic" textLength="39.2" lengthAdjust="spacingAndGlyphs">(EP)</text>
<text x="865.5" y="1295.5" font-size="20" fill="#ffffff" text-anchor="middle" font-weight="bold" font-style="italic" textLength="59.9" lengthAdjust="spacingAndGlyphs">Asym.</text>
<text x="868.6" y="1322.0" font-size="20" fill="#ffffff" text-anchor="middle" font-weight="bold" font-style="italic" textLength="39.2" lengthAdjust="spacingAndGlyphs">(EP)</text>
<text x="968.3" y="1295.5" font-size="20" fill="#ffffff" text-anchor="middle" font-weight="bold" font-style="italic" textLength="56.8" lengthAdjust="spacingAndGlyphs">Plates</text>
<text x="968.8" y="1322.0" font-size="20" fill="#ffffff" text-anchor="middle" font-weight="bold" font-style="italic" textLength="39.2" lengthAdjust="spacingAndGlyphs">(EP)</text>
<text x="58.9" y="1349.2" font-size="20" fill="#1c1c1c" text-anchor="middle" stroke="#1c1c1c" stroke-width="0.15">1</text>
<text x="105.3" y="1349.2" font-size="20" fill="#1c1c1c" textLength="34.0" lengthAdjust="spacingAndGlyphs" stroke="#1c1c1c" stroke-width="0.15">n.a.</text>
<text x="379.0" y="1349.2" font-size="20" fill="#1c1c1c" text-anchor="end" textLength="49.0" lengthAdjust="spacingAndGlyphs" stroke="#1c1c1c" stroke-width="0.15">4.579</text>
<text x="496.7" y="1349.2" font-size="20" fill="#1c1c1c" text-anchor="end" textLength="37.2" lengthAdjust="spacingAndGlyphs" stroke="#1c1c1c" stroke-width="0.15">0.24</text>
<text x="597.5" y="1349.2" font-size="20" fill="#1c1c1c" text-anchor="end" textLength="59.9" lengthAdjust="spacingAndGlyphs" stroke="#1c1c1c" stroke-width="0.15">24.764</text>
<text x="666.5" y="1349.2" font-size="20" fill="#1c1c1c" text-anchor="middle" textLength="52.6" lengthAdjust="spacingAndGlyphs" stroke="#1c1c1c" stroke-width="0.15">BMB*</text>
<text x="767.5" y="1349.2" font-size="20" fill="#1c1c1c" text-anchor="middle" textLength="38.2" lengthAdjust="spacingAndGlyphs" stroke="#1c1c1c" stroke-width="0.15">7.25</text>
<text x="868.0" y="1349.2" font-size="20" fill="#1c1c1c" text-anchor="middle" textLength="38.2" lengthAdjust="spacingAndGlyphs" stroke="#1c1c1c" stroke-width="0.15">1.30</text>
<text x="1012.2" y="1349.2" font-size="20" fill="#1c1c1c" text-anchor="end" textLength="42.3" lengthAdjust="spacingAndGlyphs" stroke="#1c1c1c" stroke-width="0.15">6343</text>
<text x="58.9" y="1376.0" font-size="20" fill="#1c1c1c" text-anchor="middle" stroke="#1c1c1c" stroke-width="0.15">2</text>
<text x="105.3" y="1376.0" font-size="20" fill="#1c1c1c" textLength="34.0" lengthAdjust="spacingAndGlyphs" stroke="#1c1c1c" stroke-width="0.15">n.a.</text>
<text x="379.0" y="1376.0" font-size="20" fill="#1c1c1c" text-anchor="end" textLength="49.0" lengthAdjust="spacingAndGlyphs" stroke="#1c1c1c" stroke-width="0.15">6.367</text>
<text x="496.7" y="1376.0" font-size="20" fill="#1c1c1c" text-anchor="end" textLength="37.2" lengthAdjust="spacingAndGlyphs" stroke="#1c1c1c" stroke-width="0.15">0.26</text>
<text x="597.5" y="1376.0" font-size="20" fill="#1c1c1c" text-anchor="end" textLength="71.3" lengthAdjust="spacingAndGlyphs" stroke="#1c1c1c" stroke-width="0.15">810.062</text>
<text x="666.8" y="1376.0" font-size="20" fill="#1c1c1c" text-anchor="middle" textLength="44.4" lengthAdjust="spacingAndGlyphs" stroke="#1c1c1c" stroke-width="0.15">BMB</text>
<text x="767.5" y="1376.0" font-size="20" fill="#1c1c1c" text-anchor="middle" textLength="33.0" lengthAdjust="spacingAndGlyphs" stroke="#1c1c1c" stroke-width="0.15">n.a.</text>
<text x="868.0" y="1376.0" font-size="20" fill="#1c1c1c" text-anchor="middle" textLength="38.2" lengthAdjust="spacingAndGlyphs" stroke="#1c1c1c" stroke-width="0.15">1.61</text>
<text x="1012.2" y="1376.0" font-size="20" fill="#1c1c1c" text-anchor="end" textLength="42.3" lengthAdjust="spacingAndGlyphs" stroke="#1c1c1c" stroke-width="0.15">9267</text>
<text x="16.5" y="1402.2" font-size="20" fill="#111111" font-weight="bold" textLength="86.8" lengthAdjust="spacingAndGlyphs">Average:</text>
<text x="495.7" y="1402.2" font-size="20" fill="#111111" text-anchor="end" font-weight="bold" textLength="59.0" lengthAdjust="spacingAndGlyphs">0.2491</text>
<text x="597.0" y="1402.2" font-size="20" fill="#111111" text-anchor="end" font-weight="bold" textLength="81.6" lengthAdjust="spacingAndGlyphs">417.4127</text>
<text x="767.5" y="1402.2" font-size="20" fill="#111111" text-anchor="middle" font-weight="bold" textLength="38.2" lengthAdjust="spacingAndGlyphs">7.25</text>
<text x="868.0" y="1402.2" font-size="20" fill="#111111" text-anchor="middle" font-weight="bold" textLength="38.2" lengthAdjust="spacingAndGlyphs">1.46</text>
<text x="1012.2" y="1402.2" font-size="20" fill="#111111" text-anchor="end" font-weight="bold" textLength="42.3" lengthAdjust="spacingAndGlyphs">7805</text>
<rect x="16.7" y="1424.2" width="3005.9" height="27.0" fill="#efefef"/>
<rect x="16.7" y="1451.2" width="3007.9" height="9.4" fill="#f2f2f2"/>
<line x1="66.8" y1="1425.9" x2="3022.6" y2="1425.9" stroke="#6a6a6a" stroke-width="2.6"/>
<polygon points="329.5,1424.6 499,1424.6 489,1450 340,1450" fill="#ffffff"/>
<rect x="330.0" y="1424.0" width="169.0" height="3.5" fill="#ffffff"/>
<line x1="16.7" y1="1450.4" x2="3022.6" y2="1450.4" stroke="#7a7a7a" stroke-width="2.6"/>
<line x1="38.0" y1="1425.0" x2="38.0" y2="1450.0" stroke="#8a8a8a" stroke-width="1.6"/>
<line x1="66.4" y1="1425.0" x2="66.4" y2="1450.0" stroke="#8a8a8a" stroke-width="1.6"/>
<polygon points="20.3,1438.6 27.7,1433.5 27.7,1443.8" fill="#000"/>
<polygon points="58.5,1438.6 51,1433.5 51,1443.8" fill="#000"/>
<line x1="68.7" y1="1427.0" x2="79.9" y2="1449.5" stroke="#303030" stroke-width="1.6"/>
<line x1="194.5" y1="1449.5" x2="204.5" y2="1426.5" stroke="#303030" stroke-width="1.6"/>
<line x1="203.5" y1="1432.0" x2="212.5" y2="1449.5" stroke="#303030" stroke-width="1.6"/>
<line x1="320.5" y1="1449.5" x2="330.5" y2="1426.5" stroke="#303030" stroke-width="1.6"/>
<line x1="329.5" y1="1432.0" x2="338.5" y2="1449.5" stroke="#303030" stroke-width="1.6"/>
<line x1="490.5" y1="1449.5" x2="500.5" y2="1426.5" stroke="#303030" stroke-width="1.6"/>
<line x1="499.5" y1="1432.0" x2="508.5" y2="1449.5" stroke="#303030" stroke-width="1.6"/>
<line x1="563.5" y1="1449.5" x2="573.5" y2="1426.5" stroke="#303030" stroke-width="1.6"/>
<line x1="572.5" y1="1432.0" x2="581.5" y2="1449.5" stroke="#303030" stroke-width="1.6"/>
<line x1="685.5" y1="1449.5" x2="695.5" y2="1426.5" stroke="#303030" stroke-width="1.6"/>
<line x1="694.5" y1="1432.0" x2="703.5" y2="1449.5" stroke="#303030" stroke-width="1.6"/>
<line x1="811.0" y1="1449.5" x2="823.0" y2="1426.5" stroke="#303030" stroke-width="1.6"/>
<text x="87.8" y="1445.2" font-size="21" fill="#262626" textLength="93.2" lengthAdjust="spacingAndGlyphs" stroke="#262626" stroke-width="0.15">Integration</text>
<text x="216.9" y="1445.2" font-size="21" fill="#262626" textLength="95.0" lengthAdjust="spacingAndGlyphs" stroke="#262626" stroke-width="0.15">Calibration</text>
<text x="349.0" y="1445.2" font-size="21" fill="#262626" textLength="129.0" lengthAdjust="spacingAndGlyphs" stroke="#262626" stroke-width="0.15">Peak Analysis</text>
<text x="514.5" y="1445.2" font-size="21" fill="#262626" textLength="38.2" lengthAdjust="spacingAndGlyphs" stroke="#262626" stroke-width="0.15">SST</text>
<text x="587.8" y="1445.2" font-size="21" fill="#262626" textLength="87.7" lengthAdjust="spacingAndGlyphs" stroke="#262626" stroke-width="0.15">Summary</text>
<text x="710.7" y="1445.2" font-size="21" fill="#262626" textLength="90.8" lengthAdjust="spacingAndGlyphs" stroke="#262626" stroke-width="0.15">Audit Trail</text>
<line x1="3016.0" y1="1426.0" x2="3016.0" y2="1450.0" stroke="#6a6a6a" stroke-width="1.4"/>
<line x1="2854.0" y1="1458.8" x2="2926.5" y2="1458.8" stroke="#9a9a9a" stroke-width="1.4"/>
<line x1="2932.7" y1="1458.8" x2="2976.0" y2="1458.8" stroke="#9a9a9a" stroke-width="1.4"/>
<line x1="2981.0" y1="1458.8" x2="3024.6" y2="1458.8" stroke="#9a9a9a" stroke-width="1.4"/>
</g>
</svg>
</body></html>
